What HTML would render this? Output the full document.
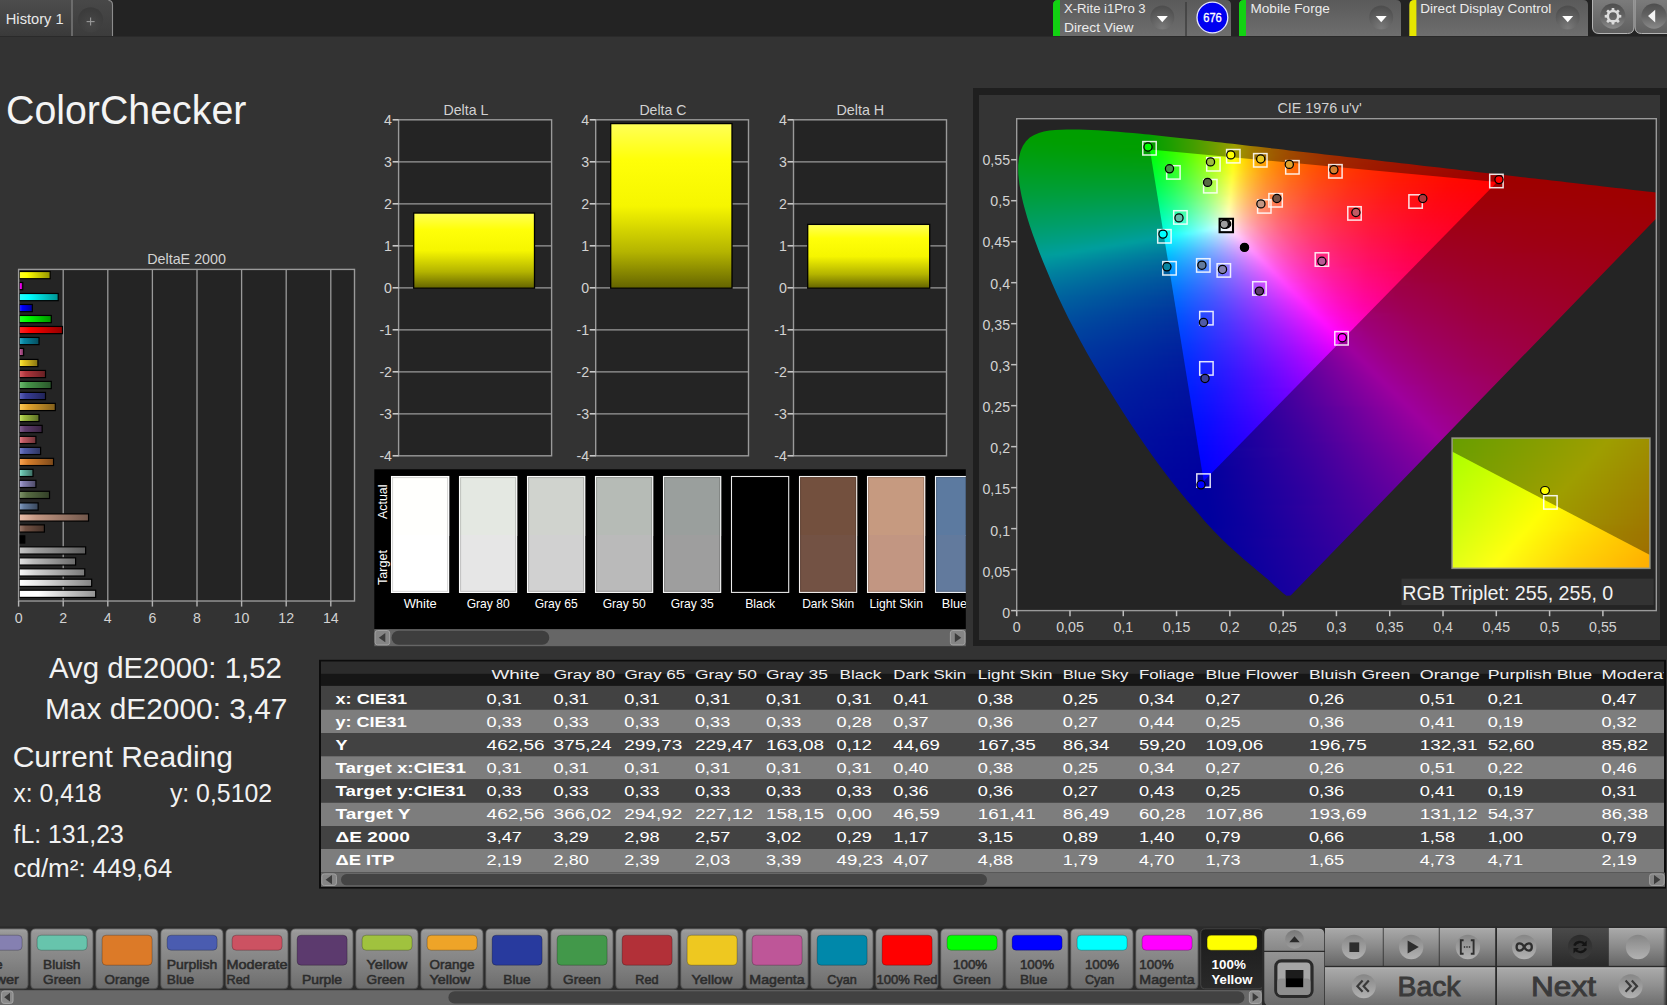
<!DOCTYPE html>
<html lang="en"><head><meta charset="utf-8"><title>ColorChecker</title>
<style>
html,body{margin:0;padding:0;background:#333333;overflow:hidden}
body{width:1667px;height:1005px;position:relative;font-family:"Liberation Sans", sans-serif}
#ov{position:absolute;left:0;top:0}
#ov text{font-family:"Liberation Sans", sans-serif;white-space:pre}
.a{position:absolute}
.s{height:3px}
</style></head>
<body>
<div class="a" style="left:972.6px;top:88.1px;width:695px;height:557.6px;background:#1f1f1f"></div>
<div class="a" style="left:979.2px;top:94.9px;width:681px;height:544.7px;background:#343434"></div>
<div class="a" style="left:1016.7px;top:118.7px;width:639.6px;height:491.9px;background:#242424"></div>
<div class="a" style="left:1016px;top:118px;width:640.3px;height:492.6px;overflow:hidden">
<div class="a" style="left:0;top:0;width:649px;height:493px;clip-path:polygon(274.7px 477.6px,270.5px 477.7px,266.9px 475px,263.6px 472px,259.8px 468.7px,256.3px 465.5px,252.3px 461.8px,249.2px 459.2px,245.7px 456.2px,241.7px 452.9px,237.4px 449.2px,232.6px 445.3px,227.5px 441px,222px 436.1px,215.9px 430.6px,212.7px 427.7px,209.4px 424.5px,206px 421.2px,202.5px 417.7px,198.8px 414px,195.1px 410px,191.1px 405.7px,186.9px 400.9px,182.4px 395.5px,177.2px 389.6px,171.7px 383.2px,165.9px 376.2px,159.9px 368.8px,153.7px 361px,147.4px 352.7px,140.9px 343.9px,134.3px 334.7px,127.5px 325px,120.5px 314.8px,113.5px 304.2px,106.4px 293.3px,99.3px 282px,92.2px 270.6px,85.1px 259px,78.1px 247.2px,71.3px 235.4px,64.7px 223.5px,58.3px 211.6px,52.3px 199.9px,46.6px 188.3px,41.3px 177px,36.4px 165.9px,31.8px 155.1px,27.5px 144.7px,23.5px 134.7px,19.9px 125.1px,16.6px 116px,13.7px 107.4px,11.2px 99.4px,9px 91.8px,7.1px 84.8px,5.6px 78.2px,4.4px 72px,3.4px 66.3px,2.8px 61px,2.3px 56.1px,2.2px 51.5px,2.2px 47.3px,3px 39.7px,4.5px 33.2px,6.9px 27.7px,10px 23.2px,13.8px 19.6px,18.1px 16.9px,22.8px 14.9px,27.9px 13.5px,33.4px 12.6px,39.1px 12.1px,45px 11.8px,51px 11.6px,57.1px 11.6px,63.1px 11.6px,69.3px 11.8px,75.5px 12px,81.9px 12.3px,88.5px 12.7px,95.2px 13.2px,102.2px 13.7px,109.5px 14.4px,117px 15.1px,124.8px 15.8px,128.8px 16.2px,132.8px 16.6px,137px 17px,141.3px 17.5px,145.6px 17.9px,150px 18.4px,154.6px 18.9px,159.2px 19.4px,163.9px 19.9px,168.7px 20.4px,173.6px 21px,178.6px 21.5px,183.7px 22.1px,188.9px 22.7px,194.2px 23.3px,199.7px 23.9px,205.2px 24.5px,210.8px 25.2px,216.6px 25.8px,222.5px 26.5px,228.4px 27.2px,234.5px 27.9px,240.7px 28.6px,247.1px 29.3px,253.5px 30.1px,260px 30.8px,266.7px 31.6px,273.4px 32.4px,280.3px 33.2px,287.3px 34px,294.3px 34.8px,301.5px 35.6px,308.8px 36.4px,316.1px 37.3px,323.5px 38.1px,331px 39px,338.6px 39.8px,346.3px 40.7px,354px 41.6px,361.8px 42.5px,369.6px 43.4px,377.4px 44.3px,385.2px 45.2px,393px 46.1px,400.7px 47px,408.3px 47.9px,415.8px 48.7px,423.3px 49.6px,430.8px 50.5px,438.2px 51.3px,445.7px 52.2px,453.1px 53px,460.4px 53.9px,467.5px 54.7px,474.5px 55.5px,481.2px 56.2px,487.9px 57px,494.4px 57.7px,500.7px 58.5px,506.9px 59.2px,512.9px 59.9px,518.8px 60.5px,524.5px 61.2px,530.1px 61.8px,535.4px 62.5px,540.6px 63.1px,545.6px 63.6px,550.5px 64.2px,555.1px 64.7px,559.6px 65.3px,564px 65.7px,568.2px 66.2px,572.2px 66.7px,579.9px 67.6px,587.1px 68.4px,593.8px 69.2px,600.2px 69.9px,606.3px 70.6px,611.9px 71.3px,617.2px 71.9px,622.1px 72.4px,626.6px 72.9px,630.8px 73.4px,636.2px 74px,640.7px 74.6px,645.8px 75.2px,650px 75.6px,654.3px 76.1px,658.7px 76.6px,662.9px 77.1px,665.1px 74.8px)">
<div style="filter:blur(1.1px)">
<div class="s"></div>
<div class="s"></div>
<div class="s"></div>
<div class="s" style="background:linear-gradient(90deg,#009e00 26px,#009e00 98px)"></div>
<div class="s" style="background:linear-gradient(90deg,#009e00 15px,#019e00 132px)"></div>
<div class="s" style="background:linear-gradient(90deg,#009e00 9px,#009e00 131px,#0e9e00 143px,#289e00 161px)"></div>
<div class="s" style="background:linear-gradient(90deg,#009e00 6px,#009e00 132px,#259e00 159px,#579e00 188px)"></div>
<div class="s" style="background:linear-gradient(90deg,#009e02 3px,#009e00 133px,#1b9e00 153px,#3f9e00 175px,#689e00 196px,#939e00 215px)"></div>
<div class="s" style="background:linear-gradient(90deg,#009e05 1px,#009e00 70px,#009e00 133px,#1c9e00 154px,#429e00 177px,#6e9e00 199px,#9d9e00 219px,#9e7300 241px)"></div>
<div class="s" style="background:linear-gradient(90deg,#009e08 0px,#019e00 134px,#1c9e00 154px,#429e00 177px,#6f9e00 199px,#9e9e00 219px,#9e8700 229px,#9e7400 240px,#9e5100 267px)"></div>
<div class="s" style="background:linear-gradient(90deg,#009e0a 0px,#009e00 134px,#1b9e00 154px,#429e00 177px,#6d9e00 198px,#9c9e00 218px,#9e7b00 235px,#9e6300 251px,#9e4d00 270px,#9e3b00 293px)"></div>
<div class="s" style="background:linear-gradient(90deg,#009e0d 0px,#019e03 135px,#1c9e01 155px,#429e00 177px,#6d9e00 198px,#9d9e00 218px,#9e7700 237px,#9e5800 259px,#9e3f00 286px,#9e2b00 319px)"></div>
<div class="s" style="background:linear-gradient(90deg,#009e10 0px,#009e07 135px,#1c9e05 155px,#429e02 177px,#6d9e00 198px,#9d9e00 218px,#9e8500 229px,#9e7100 240px,#9e4f00 267px,#9e3400 301px,#9e1f00 345px)"></div>
<div class="s" style="background:linear-gradient(90deg,#009e13 0px,#019e0a 136px,#1d9e08 156px,#439e06 178px,#6d9e04 198px,#9e9e02 218px,#9e8200 230px,#9e6c00 243px,#9e5800 258px,#9e4700 275px,#9e2b00 317px,#9e1600 372px)"></div>
<div class="s" style="background:linear-gradient(90deg,#009e16 0px,#009e0e 136px,#1b9e0c 155px,#419e0a 177px,#6d9e08 198px,#9c9e06 217px,#9e7e03 232px,#9e6701 246px,#9e5200 263px,#9e4000 282px,#9e2400 331px,#9e0f00 398px)"></div>
<div class="s" style="background:linear-gradient(90deg,#009e19 0px,#019e12 137px,#1c9e11 156px,#419e0f 177px,#699e0d 196px,#9e9c0b 218px,#9e7d07 232px,#9e6304 248px,#9e4d02 267px,#9e3a00 289px,#9e2b00 315px,#9e1d00 346px,#9e0a00 424px)"></div>
<div class="s" style="background:linear-gradient(90deg,#009e1c 0px,#009e16 137px,#1b9e15 156px,#439e13 178px,#6e9e12 198px,#9e9e10 217px,#9e7c0b 232px,#9e6108 249px,#9e4905 270px,#9e3602 294px,#9e2600 324px,#9e1900 359px,#9e0500 450px)"></div>
<div class="s" style="background:linear-gradient(90deg,#009e1f 0px,#019e1a 138px,#1d9e19 157px,#439e18 178px,#6c9e17 197px,#9e9e15 217px,#9e7b10 232px,#9e5d0b 251px,#9e4507 274px,#9e3104 301px,#9e2101 334px,#9e1400 373px,#9e0200 476px)"></div>
<div class="s" style="background:linear-gradient(90deg,#009e22 0px,#009e1f 138px,#1a9e1e 156px,#419e1d 177px,#6a9e1c 196px,#9e9d1b 217px,#9e7914 233px,#9e5a0e 253px,#9e4109 277px,#9e2d05 307px,#9e1d02 344px,#9e0f00 390px,#9e0400 451px,#9e0000 502px)"></div>
<div class="s" style="background:linear-gradient(90deg,#009e26 0px,#009e23 138px,#189e23 155px,#3e9e22 176px,#679e21 195px,#9e9c20 217px,#9e7618 234px,#9e5611 256px,#9e3d0b 282px,#9e2907 314px,#9e1803 357px,#9e0a00 411px,#9e0000 484px,#9e0000 528px)"></div>
<div class="s" style="background:linear-gradient(90deg,#009e29 0px,#009e28 139px,#1b9e28 157px,#429e27 178px,#6c9e27 197px,#9e9e27 216px,#9e8721 225px,#9e751c 234px,#9e5414 257px,#9e3a0d 285px,#9e2508 320px,#9e1404 369px,#9e0701 431px,#9e0000 483px,#9e0000 554px)"></div>
<div class="s" style="background:linear-gradient(90deg,#009e2c 0px,#009e2d 139px,#199e2d 156px,#409e2d 177px,#6a9e2d 196px,#9e9d2d 216px,#9e8626 225px,#9e7220 235px,#9e5117 259px,#9e360f 289px,#9e220a 326px,#9e1005 380px,#9e0401 449px,#9e0000 481px,#9e0000 580px)"></div>
<div class="s" style="background:linear-gradient(90deg,#009e30 0px,#009e31 140px,#1c9e32 158px,#429e32 178px,#689e33 195px,#9e9c33 216px,#9e862b 225px,#9e7225 235px,#9e4f1a 260px,#9e3312 292px,#9e1f0b 332px,#9e0d06 390px,#9e0102 465px,#9e0000 607px)"></div>
<div class="s" style="background:linear-gradient(90deg,#009e33 0px,#009e36 140px,#199e37 157px,#3f9e38 177px,#669e39 194px,#9e9e3a 215px,#9e9c39 216px,#9e8531 225px,#9e6f29 236px,#9e5c23 248px,#9e4c1d 262px,#9e3114 295px,#9e1c0c 338px,#9e0b07 397px,#9e0002 472px,#9e0000 633px)"></div>
<div class="s" style="background:linear-gradient(90deg,#009e37 0px,#009e3c 141px,#1b9e3c 158px,#419e3e 178px,#6d9e3f 197px,#9e9e40 215px,#9e8436 225px,#9e6e2e 236px,#9e5c27 248px,#9e4b21 262px,#9e2f16 296px,#9e1b0e 339px,#9e0b08 398px,#9e0004 471px,#9e0000 649px)"></div>
<div class="s" style="background:linear-gradient(90deg,#009e3a 0px,#009e41 141px,#1a9e42 158px,#419e44 178px,#6b9e45 196px,#9e9d47 215px,#9e833c 225px,#9e6d33 236px,#9e5b2b 248px,#9e4a24 262px,#9e2f19 296px,#9e1a10 339px,#9e0b0a 396px,#9e0005 468px,#9e0000 649px)"></div>
<div class="s" style="background:linear-gradient(90deg,#009e3e 0px,#009e46 142px,#1b9e48 159px,#419e4a 178px,#699e4c 195px,#9e9c4d 215px,#9e8242 225px,#9e6c38 236px,#9e5a30 248px,#9e4928 262px,#9e2e1c 296px,#9e1a13 339px,#9e0b0b 395px,#9e0006 465px,#9e0000 649px)"></div>
<div class="s" style="background:linear-gradient(90deg,#009e42 1px,#009e4c 142px,#1b9e4e 159px,#419e50 178px,#6e9e53 197px,#9e9e56 214px,#9e864a 223px,#9e6f3f 234px,#9e5c35 246px,#9e4b2d 260px,#9e2f1f 294px,#9e1a15 337px,#9e0b0d 393px,#9e0008 462px,#9e0001 649px)"></div>
<div class="s" style="background:linear-gradient(90deg,#009e46 1px,#009e52 143px,#1c9e54 160px,#439e57 179px,#6c9e5a 196px,#9e9d5d 214px,#9e8550 223px,#9e6e44 234px,#9e5b3a 246px,#9e4a31 260px,#9e2e22 294px,#9e1917 337px,#9e0a0f 392px,#9e0009 459px,#9e0001 649px)"></div>
<div class="s" style="background:linear-gradient(90deg,#009e4a 2px,#009e58 143px,#1a9e5a 159px,#409e5d 178px,#699e61 195px,#9e9c64 214px,#9e8456 223px,#9e6d49 234px,#9e5a3e 246px,#9e4935 260px,#9e2d25 294px,#9e1919 337px,#9e0a11 391px,#9e000a 457px,#9e0002 649px)"></div>
<div class="s" style="background:linear-gradient(90deg,#009e4e 3px,#009e5e 144px,#1b9e61 160px,#409e64 178px,#679e68 194px,#9e9e6d 213px,#9e9c6b 214px,#9e835c 223px,#9e6c4f 234px,#9e5943 246px,#9e4839 260px,#9e2c28 294px,#9e181c 337px,#9e0a13 390px,#9e000c 454px,#9e0003 649px)"></div>
<div class="s" style="background:linear-gradient(90deg,#009e52 4px,#009e64 144px,#1a9e67 160px,#429e6b 179px,#6c9e70 196px,#9e9e74 213px,#9e8564 222px,#9e6d55 233px,#9e5a49 245px,#9e493e 258px,#9e2e2c 291px,#9e181e 335px,#9e0a15 387px,#9e000d 451px,#9e0003 649px)"></div>
<div class="s" style="background:linear-gradient(90deg,#009e56 4px,#009e6a 145px,#1c9e6e 161px,#429e73 179px,#6a9e77 195px,#9e9d7c 213px,#9e846b 222px,#9e6c5b 233px,#9e594e 245px,#9e4843 258px,#9e2d2f 291px,#9e1821 335px,#9e0a17 386px,#9e000f 448px,#9e0004 649px)"></div>
<div class="s" style="background:linear-gradient(90deg,#009e5a 5px,#009e71 145px,#199e75 160px,#3f9e7a 178px,#679e7f 194px,#9e9c84 213px,#9e8372 222px,#9e6b61 233px,#9e5853 245px,#9e4847 258px,#9e2c33 291px,#9e1723 335px,#9e0919 385px,#9e0011 445px,#9e0005 648px)"></div>
<div class="s" style="background:linear-gradient(90deg,#009e5f 6px,#009e6a 83px,#009e78 146px,#1c9e7c 162px,#449e82 180px,#6d9e88 196px,#9e9e8e 212px,#9e847b 221px,#9e6e6a 231px,#9e5a5a 243px,#9e494d 256px,#9e2d37 289px,#9e1826 332px,#9e0a1b 382px,#9e0012 442px,#9e0006 645px)"></div>
<div class="s" style="background:linear-gradient(90deg,#009e63 7px,#009e6f 83px,#009e7f 146px,#1a9e83 161px,#419e89 179px,#6b9e90 195px,#9e9d97 212px,#9e8382 221px,#9e6d70 231px,#9e595f 243px,#9e4851 256px,#9e2c3a 289px,#9e1729 332px,#9e091d 381px,#9e0014 439px,#9e0007 642px)"></div>
<div class="s" style="background:linear-gradient(90deg,#009e68 8px,#009e75 84px,#019e86 147px,#1b9e8b 162px,#3e9e91 178px,#639e97 192px,#8c9e9e 206px,#9e999c 213px,#9e8087 222px,#9e6a74 232px,#9e5663 244px,#9e4655 257px,#9e2a3d 290px,#9e162b 332px,#9e091f 379px,#9e0016 436px,#9e0007 639px)"></div>
<div class="s" style="background:linear-gradient(90deg,#009e6d 9px,#009e7b 85px,#009e8d 147px,#159e91 159px,#329e97 173px,#5a9e9e 189px,#9e8f9d 216px,#9e7888 225px,#9e6274 236px,#9e4156 261px,#9e273e 294px,#9e142c 336px,#9e0821 381px,#9e0018 433px,#9e000f 521px,#9e0008 636px)"></div>
<div class="s" style="background:linear-gradient(90deg,#009e71 10px,#009e81 86px,#019e95 148px,#2d9e9e 171px,#9e859d 219px,#9e7088 228px,#9e5c75 239px,#9e3d57 264px,#9e2540 297px,#9e122d 340px,#9e0822 382px,#9e001a 430px,#9e0010 518px,#9e0009 634px)"></div>
<div class="s" style="background:linear-gradient(90deg,#009e76 11px,#009e87 86px,#009e9c 148px,#3d929e 180px,#9e7d9d 222px,#9e6989 231px,#9e5676 242px,#9e3858 268px,#9e2241 301px,#9e112e 344px,#9e001c 427px,#9e0012 515px,#9e000a 631px)"></div>
<div class="s" style="background:linear-gradient(90deg,#009e7b 12px,#009e8b 78px,#009e9e 134px,#01989e 149px,#3e8a9e 182px,#9e759d 225px,#9e6188 235px,#9e5076 246px,#9e3458 272px,#9e1f41 305px,#9e0f2f 348px,#9e001e 425px,#9e0013 512px,#9e000b 628px)"></div>
<div class="s" style="background:linear-gradient(90deg,#009e80 13px,#009e8e 68px,#009e9e 116px,#00919e 149px,#3d829e 183px,#9e6d9d 228px,#9e4c78 248px,#9e335c 272px,#9e1f46 303px,#9e1034 341px,#9e0020 422px,#9e0015 509px,#9e000c 625px)"></div>
<div class="s" style="background:linear-gradient(90deg,#009e86 14px,#009e9e 98px,#018a9e 150px,#3e7b9e 185px,#9e669d 231px,#9e4779 251px,#9e305e 275px,#9e1d47 306px,#9e0f36 344px,#9e0022 419px,#9e0016 506px,#9e000d 622px)"></div>
<div class="s" style="background:linear-gradient(90deg,#009e8b 15px,#009e9e 80px,#00849e 150px,#3d759e 186px,#9e5f9d 234px,#9e437a 254px,#9e2d5f 278px,#9e1b48 309px,#9e0d37 347px,#9e0024 416px,#9e0018 503px,#9e000e 619px)"></div>
<div class="s" style="background:linear-gradient(90deg,#009e91 17px,#009e9e 62px,#017e9e 151px,#3f6e9e 189px,#9e599d 237px,#9e3f7b 257px,#9e2a60 281px,#9e194a 311px,#9e0c39 349px,#9e0027 413px,#9e0019 500px,#9e000f 616px)"></div>
<div class="s" style="background:linear-gradient(90deg,#009e96 18px,#009e9e 44px,#00789e 151px,#3e699e 190px,#9e539d 240px,#9e3b7c 260px,#9e2761 284px,#9e174c 314px,#9e0b3a 352px,#9e0029 409px,#9e0021 455px,#9e0010 613px)"></div>
<div class="s" style="background:linear-gradient(90deg,#009e9c 19px,#00959e 55px,#01739e 152px,#3f639e 192px,#9e4e9d 243px,#9e377d 263px,#9e2462 288px,#9e154c 318px,#9e0a3b 355px,#9e002b 407px,#9e0022 456px,#9e0011 610px)"></div>
<div class="s" style="background:linear-gradient(90deg,#009a9e 20px,#006e9e 152px,#3e5f9e 193px,#9e499d 246px,#9e337d 266px,#9e2163 291px,#9e134d 321px,#9e093d 357px,#9e002e 404px,#9e0023 457px,#9e0013 607px)"></div>
<div class="s" style="background:linear-gradient(90deg,#00959e 21px,#01699e 153px,#40599e 196px,#9e449d 249px,#9e307e 269px,#9e1f64 294px,#9e124f 324px,#9e073e 360px,#9e0031 401px,#9e0024 458px,#9e0014 604px)"></div>
<div class="s" style="background:linear-gradient(90deg,#00909e 22px,#00659e 153px,#195e9e 172px,#3f559e 197px,#9e3f9d 252px,#9e2c7f 272px,#9e1c65 297px,#9e1050 326px,#9e063f 362px,#9e0033 398px,#9e0026 459px,#9e0015 602px)"></div>
<div class="s" style="background:linear-gradient(90deg,#008a9e 24px,#01619e 154px,#40509e 199px,#9e3b9d 255px,#9e297f 275px,#9e1a66 300px,#9e0f51 329px,#9e0540 365px,#9e0036 395px,#9e0027 460px,#9e0016 599px)"></div>
<div class="s" style="background:linear-gradient(90deg,#00859e 25px,#005d9e 154px,#3f4d9e 200px,#9e379d 258px,#9e2680 278px,#9e1867 303px,#9e0d53 332px,#9e0442 367px,#9e0039 392px,#9e0028 460px,#9e0017 596px)"></div>
<div class="s" style="background:linear-gradient(90deg,#00819e 26px,#01599e 155px,#3f499e 202px,#9e339e 261px,#9e2381 281px,#9e1668 305px,#9e0c54 334px,#9e0343 369px,#9e003c 389px,#9e002a 461px,#9e0018 593px)"></div>
<div class="s" style="background:linear-gradient(90deg,#007d9e 27px,#00559e 155px,#3f459e 203px,#9e2f9e 264px,#9e2081 284px,#9e1469 308px,#9e0a55 337px,#9e0245 371px,#9e0037 412px,#9e002b 461px,#9e001a 590px)"></div>
<div class="s" style="background:linear-gradient(90deg,#00789e 29px,#01529e 156px,#40419e 206px,#9e2b9e 267px,#9e1e82 287px,#9e126a 311px,#9e0956 340px,#9e0146 374px,#9e0038 414px,#9e002d 462px,#9e001b 587px)"></div>
<div class="s" style="background:linear-gradient(90deg,#00749e 30px,#004f9e 156px,#19489e 178px,#403e9e 207px,#9e289e 270px,#9e1b82 290px,#9e106b 314px,#9e0858 342px,#9e0147 376px,#9e002e 462px,#9e001c 584px)"></div>
<div class="s" style="background:linear-gradient(90deg,#00709e 31px,#014c9e 157px,#403b9e 209px,#9e259e 273px,#9e1983 293px,#9e0f6c 317px,#9e0659 345px,#9e0048 378px,#9e002f 463px,#9e001e 581px)"></div>
<div class="s" style="background:linear-gradient(90deg,#006c9e 33px,#00499e 157px,#3f389e 210px,#9e229e 276px,#9e1683 296px,#9e0d6d 320px,#9e055a 348px,#9e004a 380px,#9e0031 463px,#9e001f 578px)"></div>
<div class="s" style="background:linear-gradient(90deg,#00699e 34px,#01469e 158px,#41359e 213px,#9e1f9e 279px,#9e1484 299px,#9e0b6e 322px,#9e045b 350px,#9e004b 382px,#9e0032 463px,#9e0020 575px)"></div>
<div class="s" style="background:linear-gradient(90deg,#00659e 35px,#00439e 158px,#193c9e 182px,#40329e 214px,#9e1c9e 282px,#9e1284 302px,#9e0a6f 325px,#9e035c 352px,#9e004c 384px,#9e0034 464px,#9e0022 572px)"></div>
<div class="s" style="background:linear-gradient(90deg,#00629e 37px,#01409e 159px,#412f9e 216px,#9e1a9e 285px,#9e1085 305px,#9e0870 328px,#9e0058 365px,#9e004e 386px,#9e0035 464px,#9e0023 570px)"></div>
<div class="s" style="background:linear-gradient(90deg,#005f9e 38px,#003e9e 159px,#19379e 184px,#402d9e 217px,#9e179e 288px,#9e0f86 307px,#9e0771 330px,#9e005c 362px,#9e0050 387px,#9e0037 464px,#9e0025 567px)"></div>
<div class="s" style="background:linear-gradient(90deg,#005c9e 40px,#013c9e 160px,#402b9e 219px,#9e159e 291px,#9e0c86 311px,#9e0672 333px,#9e005f 360px,#9e0051 389px,#9e0038 464px,#9e0026 564px)"></div>
<div class="s" style="background:linear-gradient(90deg,#00599e 41px,#00399e 160px,#40289e 220px,#9e129e 294px,#9e0b86 314px,#9e0472 336px,#9e0064 357px,#9e0052 391px,#9e003a 464px,#9e0028 561px)"></div>
<div class="s" style="background:linear-gradient(90deg,#00569e 42px,#01379e 161px,#41269e 223px,#9e109e 297px,#9e0988 316px,#9e0374 338px,#9e0062 364px,#9e0053 393px,#9e003b 464px,#9e0029 558px)"></div>
<div class="s" style="background:linear-gradient(90deg,#00539e 44px,#00359e 161px,#1a2e9e 188px,#40249e 224px,#9e0e9e 300px,#9e0788 319px,#9e0274 341px,#9e0055 394px,#9e003d 464px,#9e002b 555px)"></div>
<div class="s" style="background:linear-gradient(90deg,#00509e 45px,#01339e 162px,#41229e 226px,#9e0c9e 303px,#9e0688 322px,#9e0175 344px,#9e0056 396px,#9e003e 464px,#9e002c 552px)"></div>
<div class="s" style="background:linear-gradient(90deg,#004e9e 47px,#00319e 162px,#1a2a9e 190px,#40209e 227px,#9e0a9e 306px,#9e0489 325px,#9e0076 346px,#9e0058 397px,#9e0040 463px,#9e002e 549px)"></div>
<div class="s" style="background:linear-gradient(90deg,#004b9e 48px,#012f9e 163px,#421e9e 230px,#9e089e 309px,#9e0389 328px,#9e0077 349px,#9e0059 399px,#9e0042 463px,#9e0030 546px)"></div>
<div class="s" style="background:linear-gradient(90deg,#00499e 50px,#002d9e 163px,#1a269e 192px,#411c9e 231px,#9e079e 312px,#9e028a 330px,#9e0078 351px,#9e005b 400px,#9e0044 463px,#9e0032 543px)"></div>
<div class="s" style="background:linear-gradient(90deg,#00469e 51px,#012c9e 164px,#411a9e 233px,#9e059e 315px,#9e0079 353px,#9e005c 402px,#9e0045 463px,#9e0033 540px)"></div>
<div class="s" style="background:linear-gradient(90deg,#00449e 53px,#002a9e 164px,#1a239e 194px,#41199e 234px,#9e039e 318px,#9e007a 356px,#9e005e 403px,#9e0047 463px,#9e0035 538px)"></div>
<div class="s" style="background:linear-gradient(90deg,#00429e 55px,#01289e 165px,#41179e 236px,#9e029e 321px,#9e007b 358px,#9e005f 405px,#9e0048 463px,#9e0037 535px)"></div>
<div class="s" style="background:linear-gradient(90deg,#00409e 56px,#00279e 165px,#1a1f9e 196px,#40169e 237px,#9e019e 324px,#9e007c 361px,#9e0060 406px,#9e004a 462px,#9e0039 532px)"></div>
<div class="s" style="background:linear-gradient(90deg,#003d9e 58px,#01259e 166px,#1b1e9e 198px,#42149e 240px,#9e009e 327px,#9e007d 363px,#9e0062 407px,#9e004c 462px,#9e003b 529px)"></div>
<div class="s" style="background:linear-gradient(90deg,#003b9e 59px,#00249e 166px,#1a1c9e 198px,#41129e 241px,#9e009e 330px,#9e007d 366px,#9e0063 409px,#9e004e 462px,#9e003c 526px)"></div>
<div class="s" style="background:linear-gradient(90deg,#00399e 61px,#01229e 167px,#41119e 243px,#8d009e 317px,#9e009e 333px,#9e007e 368px,#9e0065 410px,#9e0050 461px,#9e003e 523px)"></div>
<div class="s" style="background:linear-gradient(90deg,#00379e 63px,#00219e 167px,#1a1a9e 200px,#41109e 244px,#87009e 315px,#9e009e 336px,#9e0080 370px,#9e0066 411px,#9e0052 460px,#9e0041 520px)"></div>
<div class="s" style="background:linear-gradient(90deg,#00369e 64px,#01209e 168px,#410e9e 246px,#82009e 312px,#9e009e 339px,#9e0081 372px,#9e0068 412px,#9e0053 460px,#9e0043 517px)"></div>
<div class="s" style="background:linear-gradient(90deg,#00349e 66px,#001e9e 168px,#1a179e 202px,#410d9e 247px,#7d009e 310px,#9e009e 342px,#9e0081 375px,#9e0069 413px,#9e0055 459px,#9e0045 514px)"></div>
<div class="s" style="background:linear-gradient(90deg,#00329e 68px,#011d9e 169px,#410c9e 249px,#77009e 307px,#9e009e 345px,#9e0082 377px,#9e006b 414px,#9e0058 458px,#9e0047 511px)"></div>
<div class="s" style="background:linear-gradient(90deg,#00309e 70px,#001c9e 169px,#1a159e 204px,#410b9e 251px,#72009e 304px,#9e009e 348px,#9e0082 380px,#9e006c 416px,#9e0059 459px,#9e0049 509px)"></div>
<div class="s" style="background:linear-gradient(90deg,#002f9e 71px,#011b9e 170px,#2c0f9e 228px,#6d009e 301px,#9e009e 351px,#9e0084 382px,#9e006e 417px,#9e005b 458px,#9e004b 506px)"></div>
<div class="s" style="background:linear-gradient(90deg,#002d9e 73px,#001a9e 170px,#2a0e9e 226px,#68009e 298px,#9e009e 354px,#9e0085 384px,#9e006f 418px,#9e005d 457px,#9e004d 503px)"></div>
<div class="s" style="background:linear-gradient(90deg,#002b9e 75px,#01189e 171px,#290d9e 226px,#63009e 295px,#9e009e 357px,#9e0086 386px,#9e0071 418px,#9e005f 456px,#9e0050 500px)"></div>
<div class="s" style="background:linear-gradient(90deg,#002a9e 77px,#01179e 172px,#270d9e 225px,#5f009e 292px,#9e009e 360px,#9e0087 388px,#9e0073 419px,#9e0062 455px,#9e0052 497px)"></div>
<div class="s" style="background:linear-gradient(90deg,#00289e 78px,#01169e 172px,#240c9e 223px,#5a009e 289px,#9e009e 363px,#9e0088 390px,#9e0074 420px,#9e0055 494px)"></div>
<div class="s" style="background:linear-gradient(90deg,#00279e 80px,#01159e 173px,#230c9e 223px,#56009e 286px,#9e009e 366px,#9e0089 392px,#9e0076 421px,#9e0057 491px)"></div>
<div class="s" style="background:linear-gradient(90deg,#00259e 82px,#01149e 174px,#220b9e 222px,#52009e 283px,#9e009e 369px,#9e0089 395px,#9e0078 422px,#9e005a 488px)"></div>
<div class="s" style="background:linear-gradient(90deg,#00249e 84px,#01139e 174px,#200b9e 220px,#4e009e 280px,#9e009e 372px,#9e0079 423px,#9e005d 485px)"></div>
<div class="s" style="background:linear-gradient(90deg,#00239e 86px,#01129e 175px,#1f0a9e 220px,#4a009e 277px,#9e009e 375px,#9e007b 423px,#9e005f 482px)"></div>
<div class="s" style="background:linear-gradient(90deg,#00219e 88px,#01119e 176px,#1d0a9e 219px,#46009e 274px,#9e009e 378px,#9e007d 424px,#9e0062 479px)"></div>
<div class="s" style="background:linear-gradient(90deg,#00209e 89px,#01119e 176px,#43009e 272px,#9e009e 381px,#9e007e 425px,#9e0065 477px)"></div>
<div class="s" style="background:linear-gradient(90deg,#001f9e 91px,#01109e 177px,#40009e 269px,#9e009e 384px,#9e0080 426px,#9e0068 474px)"></div>
<div class="s" style="background:linear-gradient(90deg,#001d9e 93px,#020f9e 178px,#3c009e 266px,#9e009e 387px,#9e0082 426px,#9e006b 471px)"></div>
<div class="s" style="background:linear-gradient(90deg,#001c9e 95px,#020e9e 179px,#39009e 263px,#9e009e 390px,#9e0083 427px,#9e006e 468px)"></div>
<div class="s" style="background:linear-gradient(90deg,#001b9e 97px,#020d9e 180px,#36009e 260px,#67009e 326px,#9e009e 393px,#9e0086 427px,#9e0071 465px)"></div>
<div class="s" style="background:linear-gradient(90deg,#001a9e 99px,#000d9e 176px,#020c9e 181px,#33009e 257px,#65009e 326px,#9e009e 396px,#9e0087 428px,#9e0074 462px)"></div>
<div class="s" style="background:linear-gradient(90deg,#00199e 101px,#000c9e 177px,#30009e 254px,#63009e 325px,#9e009e 399px,#9e0089 428px,#9e0077 459px)"></div>
<div class="s" style="background:linear-gradient(90deg,#00189e 103px,#000b9e 178px,#2d009e 251px,#61009e 325px,#9e009e 402px,#9e007b 456px)"></div>
<div class="s" style="background:linear-gradient(90deg,#00169e 105px,#010b9e 179px,#2a009e 248px,#60009e 325px,#9e009e 405px,#9e007e 453px)"></div>
<div class="s" style="background:linear-gradient(90deg,#00159e 107px,#010a9e 180px,#27009e 245px,#41009e 284px,#9e009e 408px,#9e0082 450px)"></div>
<div class="s" style="background:linear-gradient(90deg,#00149e 109px,#01099e 181px,#24009e 242px,#41009e 286px,#9e009e 411px,#9e0086 447px)"></div>
<div class="s" style="background:linear-gradient(90deg,#00139e 110px,#01089e 182px,#22009e 239px,#42009e 289px,#9e009e 414px,#9e0089 445px)"></div>
<div class="s" style="background:linear-gradient(90deg,#00129e 112px,#01089e 183px,#1f009e 236px,#43009e 291px,#9e009e 417px,#9e008d 442px)"></div>
<div class="s" style="background:linear-gradient(90deg,#00119e 114px,#02079e 185px,#1d009e 233px,#43009e 294px,#9e009e 420px,#9e0091 439px)"></div>
<div class="s" style="background:linear-gradient(90deg,#00109e 117px,#00079e 180px,#03069e 188px,#1b009e 230px,#44009e 297px,#9e009e 423px,#9e0095 436px)"></div>
<div class="s" style="background:linear-gradient(90deg,#000f9e 119px,#00069e 181px,#05059e 192px,#19009e 228px,#3a009e 282px,#9e009e 426px,#9e0099 433px)"></div>
<div class="s" style="background:linear-gradient(90deg,#000f9e 121px,#00069e 181px,#07049e 196px,#17009e 225px,#47009e 305px,#9e009e 430px)"></div>
<div class="s" style="background:linear-gradient(90deg,#000e9e 123px,#00059e 182px,#07039e 197px,#14009e 222px,#46009e 305px,#9a009e 427px)"></div>
<div class="s" style="background:linear-gradient(90deg,#000d9e 125px,#00059e 182px,#07039e 197px,#44009e 303px,#96009e 424px)"></div>
<div class="s" style="background:linear-gradient(90deg,#000c9e 127px,#00049e 183px,#07029e 198px,#43009e 303px,#91009e 421px)"></div>
<div class="s" style="background:linear-gradient(90deg,#000b9e 129px,#00049e 183px,#07029e 198px,#41009e 301px,#8d009e 418px)"></div>
<div class="s" style="background:linear-gradient(90deg,#000a9e 131px,#00039e 184px,#06019e 198px,#3e009e 299px,#89009e 415px)"></div>
<div class="s" style="background:linear-gradient(90deg,#000a9e 133px,#00039e 184px,#06019e 199px,#3d009e 299px,#86009e 413px)"></div>
<div class="s" style="background:linear-gradient(90deg,#00099e 135px,#00029e 185px,#06019e 199px,#3b009e 297px,#82009e 410px)"></div>
<div class="s" style="background:linear-gradient(90deg,#00089e 138px,#00029e 185px,#07009e 201px,#3a009e 297px,#7f009e 407px)"></div>
<div class="s" style="background:linear-gradient(90deg,#00079e 140px,#00019e 186px,#06009e 201px,#38009e 295px,#7b009e 404px)"></div>
<div class="s" style="background:linear-gradient(90deg,#00069e 142px,#00019e 186px,#06009e 201px,#37009e 294px,#77009e 401px)"></div>
<div class="s" style="background:linear-gradient(90deg,#00069e 144px,#00019e 187px,#06009e 202px,#35009e 293px,#74009e 398px)"></div>
<div class="s" style="background:linear-gradient(90deg,#00059e 147px,#00009e 187px,#07009e 203px,#34009e 292px,#71009e 395px)"></div>
<div class="s" style="background:linear-gradient(90deg,#00049e 149px,#00009e 188px,#07009e 204px,#33009e 291px,#6d009e 392px)"></div>
<div class="s" style="background:linear-gradient(90deg,#00049e 151px,#00009e 188px,#06009e 204px,#31009e 290px,#6a009e 389px)"></div>
<div class="s" style="background:linear-gradient(90deg,#00039e 154px,#00009e 189px,#07009e 206px,#30009e 289px,#67009e 386px)"></div>
<div class="s" style="background:linear-gradient(90deg,#00029e 156px,#00009e 189px,#07009e 207px,#2f009e 289px,#64009e 383px)"></div>
<div class="s" style="background:linear-gradient(90deg,#00029e 159px,#00009e 190px,#08009e 209px,#2f009e 289px,#61009e 381px)"></div>
<div class="s" style="background:linear-gradient(90deg,#00019e 161px,#00009e 190px,#08009e 209px,#2d009e 287px,#5f009e 378px)"></div>
<div class="s" style="background:linear-gradient(90deg,#00009e 164px,#00009e 191px,#08009e 211px,#2c009e 287px,#5c009e 375px)"></div>
<div class="s" style="background:linear-gradient(90deg,#00009e 166px,#00009e 191px,#08009e 212px,#2b009e 286px,#59009e 372px)"></div>
<div class="s" style="background:linear-gradient(90deg,#00009e 169px,#00009e 192px,#09009e 215px,#56009e 369px)"></div>
<div class="s" style="background:linear-gradient(90deg,#00009e 171px,#00009e 192px,#09009e 216px,#53009e 366px)"></div>
<div class="s" style="background:linear-gradient(90deg,#00009e 174px,#00009e 193px,#0a009e 219px,#51009e 363px)"></div>
<div class="s" style="background:linear-gradient(90deg,#00009e 176px,#00009e 194px,#0a009e 220px,#4e009e 360px)"></div>
<div class="s" style="background:linear-gradient(90deg,#00009e 179px,#00009e 194px,#0b009e 223px,#4c009e 357px)"></div>
<div class="s" style="background:linear-gradient(90deg,#00009e 182px,#00009e 195px,#0d009e 227px,#49009e 354px)"></div>
<div class="s" style="background:linear-gradient(90deg,#00009e 184px,#00009e 195px,#0d009e 229px,#47009e 351px)"></div>
<div class="s" style="background:linear-gradient(90deg,#00009e 187px,#01009e 197px,#10009e 235px,#45009e 349px)"></div>
<div class="s" style="background:linear-gradient(90deg,#00009e 190px,#11009e 240px,#43009e 346px)"></div>
<div class="s" style="background:linear-gradient(90deg,#00009e 192px,#13009e 244px,#40009e 343px)"></div>
<div class="s" style="background:linear-gradient(90deg,#00009e 195px,#15009e 251px,#3e009e 340px)"></div>
<div class="s" style="background:linear-gradient(90deg,#00009e 198px,#3c009e 337px)"></div>
<div class="s" style="background:linear-gradient(90deg,#01009e 201px,#3a009e 334px)"></div>
<div class="s" style="background:linear-gradient(90deg,#02009e 204px,#38009e 331px)"></div>
<div class="s" style="background:linear-gradient(90deg,#03009e 208px,#35009e 328px)"></div>
<div class="s" style="background:linear-gradient(90deg,#04009e 211px,#33009e 325px)"></div>
<div class="s" style="background:linear-gradient(90deg,#05009e 214px,#31009e 322px)"></div>
<div class="s" style="background:linear-gradient(90deg,#06009e 217px,#30009e 320px)"></div>
<div class="s" style="background:linear-gradient(90deg,#07009e 221px,#2e009e 317px)"></div>
<div class="s" style="background:linear-gradient(90deg,#08009e 224px,#2c009e 314px)"></div>
<div class="s" style="background:linear-gradient(90deg,#09009e 228px,#2a009e 311px)"></div>
<div class="s" style="background:linear-gradient(90deg,#0a009e 232px,#29009e 308px)"></div>
<div class="s" style="background:linear-gradient(90deg,#0b009e 235px,#27009e 305px)"></div>
<div class="s" style="background:linear-gradient(90deg,#0c009e 239px,#25009e 302px)"></div>
<div class="s" style="background:linear-gradient(90deg,#0d009e 242px,#23009e 299px)"></div>
<div class="s" style="background:linear-gradient(90deg,#0e009e 246px,#22009e 296px)"></div>
<div class="s" style="background:linear-gradient(90deg,#0f009e 249px,#20009e 293px)"></div>
<div class="s" style="background:linear-gradient(90deg,#10009e 252px,#1e009e 290px)"></div>
<div class="s" style="background:linear-gradient(90deg,#11009e 256px,#1d009e 288px)"></div>
<div class="s" style="background:linear-gradient(90deg,#12009e 259px,#1c009e 285px)"></div>
<div class="s" style="background:linear-gradient(90deg,#13009e 263px,#1a009e 282px)"></div>
<div class="s"></div>
<div class="s"></div>
<div class="s"></div>
<div class="s"></div>
<div class="s"></div>
</div></div>
<div class="a" style="left:0;top:0;width:649px;height:493px;clip-path:polygon(481.1px 63.9px,133.9px 31.5px,187.7px 363.2px)">
<div style="filter:blur(1.1px)">
<div class="s"></div>
<div class="s"></div>
<div class="s"></div>
<div class="s"></div>
<div class="s"></div>
<div class="s"></div>
<div class="s"></div>
<div class="s"></div>
<div class="s"></div>
<div class="s"></div>
<div class="s" style="background:linear-gradient(90deg,#00ff01 128px,#00ff00 134px,#07ff00 138px,#27ff00 152px,#4eff00 167px)"></div>
<div class="s" style="background:linear-gradient(90deg,#00ff06 129px,#03ff05 136px,#32ff01 157px,#6dff00 178px,#b3ff00 199px)"></div>
<div class="s" style="background:linear-gradient(90deg,#00ff0b 129px,#00ff0b 135px,#08ff0a 139px,#28ff08 153px,#52ff05 169px,#a2ff01 194px,#ceff00 206px,#feff00 218px,#ffd000 231px)"></div>
<div class="s" style="background:linear-gradient(90deg,#00ff11 129px,#00ff10 135px,#07ff10 139px,#27ff0e 153px,#4fff0c 168px,#a2ff07 194px,#ffff02 218px,#ffdc01 227px,#ffbb00 238px,#ff9e00 250px,#ff8500 263px)"></div>
<div class="s" style="background:linear-gradient(90deg,#00ff17 130px,#00ff17 136px,#08ff16 140px,#29ff14 154px,#51ff12 169px,#9eff0e 193px,#fffe0a 218px,#ffe207 225px,#ffc805 233px,#ff9c02 250px,#ff7700 271px,#ff5900 295px)"></div>
<div class="s" style="background:linear-gradient(90deg,#00ff1e 130px,#00ff1d 136px,#05ff1d 139px,#25ff1b 153px,#4eff19 168px,#9bff16 192px,#ccff14 205px,#fdff12 217px,#fffc11 218px,#ffda0e 227px,#ffbb0a 237px,#ffa007 248px,#ff8605 261px,#ff7002 275px,#ff5d00 290px,#ff3c00 327px)"></div>
<div class="s" style="background:linear-gradient(90deg,#00ff24 131px,#00ff24 137px,#08ff23 141px,#2aff22 155px,#50ff20 169px,#a2ff1d 194px,#ffff1a 217px,#ffd514 228px,#ffb20f 240px,#ff920b 254px,#ff7607 270px,#ff5e04 288px,#ff4902 309px,#ff3700 332px,#ff2800 359px)"></div>
<div class="s" style="background:linear-gradient(90deg,#00ff2b 131px,#00ff2a 137px,#07ff2a 141px,#26ff29 154px,#50ff28 169px,#9fff25 193px,#fffe22 217px,#ffd01b 229px,#ffa914 243px,#ff850f 260px,#ff680a 279px,#ff4f06 301px,#ff3a03 327px,#ff2800 357px,#ff1900 391px)"></div>
<div class="s" style="background:linear-gradient(90deg,#00ff32 132px,#00ff31 138px,#06ff31 141px,#25ff30 154px,#4fff2f 169px,#9cff2e 192px,#fffd2b 217px,#ffcc22 230px,#ffa019 246px,#ff7b12 265px,#ff5d0d 287px,#ff4308 313px,#ff2e04 344px,#ff1c01 380px,#ff0e00 423px)"></div>
<div class="s" style="background:linear-gradient(90deg,#00ff39 132px,#00ff39 138px,#05ff39 141px,#24ff38 154px,#4cff37 168px,#98ff36 191px,#caff35 204px,#feff35 216px,#fffc34 217px,#ffdf2e 224px,#ffc428 232px,#ff981e 249px,#ff7216 270px,#ff530f 295px,#ff3909 325px,#ff2405 361px,#ff1301 404px,#ff0600 455px)"></div>
<div class="s" style="background:linear-gradient(90deg,#00ff40 133px,#00ff40 139px,#06ff40 142px,#26ff40 155px,#51ff40 170px,#a3ff3f 194px,#ffff3e 216px,#ffde36 224px,#ffc32f 232px,#ffaa29 241px,#ff9323 251px,#ff6b19 274px,#ff4b11 302px,#ff300b 337px,#ff1b05 379px,#ff0a01 432px,#ff0000 487px)"></div>
<div class="s" style="background:linear-gradient(90deg,#00ff48 133px,#00ff48 139px,#05ff48 142px,#25ff48 155px,#4eff48 169px,#9cff48 192px,#fffe48 216px,#ffdd3f 224px,#ffc137 232px,#ffa830 241px,#ff9129 251px,#ff6a1e 274px,#ff4a15 302px,#ff2f0e 337px,#ff1b08 379px,#ff0903 434px,#ff0000 487px)"></div>
<div class="s" style="background:linear-gradient(90deg,#00ff50 134px,#00ff50 140px,#07ff50 143px,#24ff50 155px,#4dff51 169px,#9cff51 192px,#ccff52 204px,#fdff52 215px,#fffc52 216px,#ffdb47 224px,#ffc03f 232px,#ffa737 241px,#ff9030 251px,#ff6923 274px,#ff4919 302px,#ff2f11 337px,#ff1a0a 379px,#ff0805 435px,#ff0001 486px)"></div>
<div class="s" style="background:linear-gradient(90deg,#00ff57 134px,#00ff58 140px,#06ff58 143px,#24ff59 155px,#4cff59 169px,#74ff5a 181px,#a0ff5b 193px,#cdff5c 204px,#feff5d 215px,#ffde51 223px,#ffc248 231px,#ffa83f 240px,#ff9337 249px,#ff6a29 272px,#ff4a1e 300px,#ff2f15 335px,#ff1a0d 377px,#ff0807 432px,#ff0003 483px)"></div>
<div class="s" style="background:linear-gradient(90deg,#00ff60 135px,#00ff60 141px,#07ff60 144px,#28ff61 157px,#4fff63 170px,#a0ff65 193px,#fffe67 215px,#ffe05c 222px,#ffc451 230px,#ffa947 239px,#ff923e 249px,#ff692f 272px,#ff4a23 299px,#ff2f19 333px,#ff1a10 375px,#ff0809 430px,#ff0005 480px)"></div>
<div class="s" style="background:linear-gradient(90deg,#00ff68 135px,#00ff69 141px,#04ff69 143px,#22ff6a 155px,#4bff6c 169px,#99ff6f 191px,#fffd72 215px,#ffdf65 222px,#ffc25a 230px,#ffa84f 239px,#ff9045 249px,#ff6935 271px,#ff4927 298px,#ff2f1c 332px,#ff1a13 373px,#ff080c 427px,#ff0007 477px)"></div>
<div class="s" style="background:linear-gradient(90deg,#00ff71 136px,#01ff72 142px,#05ff72 144px,#24ff74 156px,#4eff76 170px,#99ff79 191px,#cbff7c 203px,#feff7e 214px,#fffc7d 215px,#ffdd6f 222px,#ffc162 230px,#ffa756 239px,#ff914d 248px,#ff6a3b 270px,#ff492c 297px,#ff2f20 330px,#ff1a17 371px,#ff080e 425px,#ff0009 474px)"></div>
<div class="s" style="background:linear-gradient(90deg,#00ff7a 136px,#00ff7a 142px,#04ff7b 144px,#23ff7d 156px,#4dff80 170px,#77ff82 182px,#a1ff85 193px,#d0ff87 204px,#ffff8a 214px,#ffe07b 221px,#ffc36d 229px,#ffa860 238px,#ff9255 247px,#ff6a41 269px,#ff4a32 295px,#ff2f25 328px,#ff1a1a 369px,#ff0811 422px,#ff000b 471px)"></div>
<div class="s" style="background:linear-gradient(90deg,#00ff83 137px,#01ff84 143px,#05ff84 145px,#24ff87 157px,#4dff8a 170px,#9dff8f 192px,#fffe95 214px,#ffde85 221px,#ffc477 228px,#ffa969 237px,#ff935d 246px,#ff6a48 268px,#ff4a37 294px,#ff2f29 327px,#ff1a1d 367px,#ff0814 420px,#ff000e 468px)"></div>
<div class="s" style="background:linear-gradient(90deg,#00ff8c 137px,#00ff8d 143px,#04ff8e 145px,#23ff91 157px,#4cff94 170px,#99ff9a 191px,#c8ff9e 202px,#fdffa2 213px,#fffca1 214px,#ffdd8f 221px,#ffc381 228px,#ffa871 237px,#ff9165 246px,#ff694e 268px,#ff493c 294px,#ff2f2d 326px,#ff1a21 366px,#ff0816 418px,#ff0010 465px)"></div>
<div class="s" style="background:linear-gradient(90deg,#00ff96 138px,#00ff97 143px,#05ff98 146px,#23ff9b 157px,#4bff9f 170px,#95ffa6 190px,#c9ffaa 202px,#feffaf 213px,#fffbad 214px,#ffdb9a 221px,#ffc18a 228px,#ffa67a 237px,#ff906c 246px,#ff6955 267px,#ff4941 293px,#ff2e31 325px,#ff1a24 364px,#ff0819 416px,#ff0012 462px)"></div>
<div class="s" style="background:linear-gradient(90deg,#00ff9f 138px,#00ffa1 144px,#04ffa2 146px,#22ffa5 157px,#4bffaa 170px,#72ffae 181px,#9effb2 192px,#fffebc 213px,#ffdea7 220px,#ffc396 227px,#ffaa86 235px,#ff9377 244px,#ff6b5d 265px,#ff4a48 291px,#ff2f36 323px,#ff1a28 362px,#ff081c 413px,#ff0015 459px)"></div>
<div class="s" style="background:linear-gradient(90deg,#00ffaa 139px,#00ffab 144px,#05ffac 147px,#23ffb0 158px,#4dffb5 171px,#9effbf 192px,#fffdc8 213px,#ffddb2 220px,#ffc2a0 227px,#ffa98f 235px,#ff917f 244px,#ff6963 265px,#ff494d 290px,#ff2e3b 322px,#ff1a2c 360px,#ff081f 410px,#ff0017 456px)"></div>
<div class="s" style="background:linear-gradient(90deg,#00ffb4 139px,#00ffb6 145px,#04ffb7 147px,#22ffbb 158px,#49ffc0 170px,#96ffca 190px,#c7ffd1 201px,#fdffd7 212px,#fffbd5 213px,#ffdbbd 220px,#ffc0aa 227px,#ffa798 235px,#ff9087 244px,#ff696b 264px,#ff4953 289px,#ff2f40 320px,#ff1a30 358px,#ff0822 408px,#ff001a 453px)"></div>
<div class="s" style="background:linear-gradient(90deg,#00ffbf 140px,#00ffc1 145px,#06ffc2 148px,#24ffc7 159px,#50ffcd 172px,#a3ffd9 193px,#ffffe6 212px,#ffdecc 219px,#ffc2b7 226px,#ffa8a3 234px,#ff9393 242px,#ff6b74 262px,#ff4a5a 287px,#ff2f45 318px,#ff1a34 355px,#ff0825 405px,#ff001c 450px)"></div>
<div class="s" style="background:linear-gradient(90deg,#00ffc9 140px,#00ffcc 146px,#04ffcd 148px,#23ffd3 159px,#4bffd9 171px,#9affe5 191px,#fffef3 212px,#ffdcd8 219px,#ffc1c2 226px,#ffa7ad 234px,#ff929b 242px,#ff6a7b 262px,#ff4a60 286px,#ff2f4a 317px,#ff1a38 354px,#ff0829 403px,#ff001f 447px)"></div>
<div class="s" style="background:linear-gradient(90deg,#00ffd5 141px,#00ffd7 146px,#03ffd8 148px,#1fffde 158px,#47ffe5 170px,#8dfff1 188px,#e2ffff 206px,#fdfaff 212px,#fff7fc 213px,#ffd6e0 220px,#ffbcc9 227px,#ff8ea2 243px,#ff6780 263px,#ff4865 287px,#ff2e4e 317px,#ff193c 353px,#ff082c 401px,#ff0022 444px)"></div>
<div class="s" style="background:linear-gradient(90deg,#00ffe0 141px,#02ffe4 148px,#35ffee 165px,#60fff6 177px,#92ffff 189px,#fdeaff 215px,#ffe6fc 216px,#ffc9e1 223px,#ffb0cb 230px,#ff85a4 246px,#ff6183 266px,#ff4469 289px,#ff2c52 318px,#ff183f 354px,#ff072f 401px,#ff0025 441px)"></div>
<div class="s" style="background:linear-gradient(90deg,#00ffec 142px,#01fff0 148px,#2dfffa 163px,#49ffff 171px,#91efff 191px,#fddaff 218px,#ffd7fd 219px,#ffbce2 226px,#ffa5cd 233px,#ff7da6 249px,#ff5c87 268px,#ff416c 291px,#ff2a55 320px,#ff1742 354px,#ff0732 399px,#ff0028 438px)"></div>
<div class="s" style="background:linear-gradient(90deg,#00fff8 142px,#00fffc 148px,#31f6ff 165px,#86e4ff 190px,#ffc9fd 222px,#ff9bce 236px,#ff76a9 252px,#ff5789 271px,#ff3d6f 294px,#ff2758 322px,#ff1545 356px,#ff0634 401px,#ff002b 436px)"></div>
<div class="s" style="background:linear-gradient(90deg,#00f9ff 143px,#01f5ff 149px,#37e8ff 168px,#8ad6ff 193px,#ffbcfd 225px,#ff94d2 238px,#ff70ad 254px,#ff538d 273px,#ff3b73 295px,#ff255c 323px,#ff1449 356px,#ff0637 400px,#ff002e 433px)"></div>
<div class="s" style="background:linear-gradient(90deg,#00eeff 143px,#00eaff 149px,#37dcff 169px,#8acaff 195px,#ffb0fd 228px,#ff8ad4 241px,#ff69af 257px,#ff4f91 275px,#ff3876 297px,#ff245f 324px,#ff144c 356px,#ff053a 399px,#ff0031 430px)"></div>
<div class="s" style="background:linear-gradient(90deg,#00e2ff 144px,#01dfff 150px,#39d1ff 171px,#8ebeff 198px,#ffa4fd 231px,#ff82d5 244px,#ff63b0 260px,#ff4a93 278px,#ff357a 299px,#ff2364 324px,#ff1451 353px,#ff053f 395px,#ff0035 427px)"></div>
<div class="s" style="background:linear-gradient(90deg,#00d8ff 144px,#02d4ff 151px,#39c6ff 172px,#8eb3ff 200px,#ff9afd 234px,#ff7ad6 247px,#ff5eb4 262px,#ff4696 280px,#ff327d 301px,#ff2167 325px,#ff1355 353px,#ff0542 394px,#ff0038 424px)"></div>
<div class="s" style="background:linear-gradient(90deg,#00cfff 145px,#01cbff 151px,#3bbcff 174px,#8ea9ff 202px,#ff90fd 237px,#ff72d7 250px,#ff58b6 265px,#ff4298 283px,#ff2f80 303px,#ff1f6b 326px,#ff1259 353px,#ff0546 393px,#ff003c 421px)"></div>
<div class="s" style="background:linear-gradient(90deg,#00c6ff 145px,#02c1ff 152px,#3bb3ff 175px,#919fff 205px,#ff86fe 240px,#ff6ad8 253px,#ff52b7 268px,#ff3e9c 285px,#ff2c83 305px,#ff1d6e 328px,#ff115c 354px,#ff0449 393px,#ff003f 418px)"></div>
<div class="s" style="background:linear-gradient(90deg,#00bdff 146px,#03b9ff 153px,#40a9ff 178px,#9396ff 208px,#ff7dfe 243px,#ff63d9 256px,#ff4ebb 270px,#ff3b9f 287px,#ff2a87 306px,#ff1c72 328px,#ff1060 353px,#ff044d 391px,#ff0043 415px)"></div>
<div class="s" style="background:linear-gradient(90deg,#00b5ff 146px,#02b1ff 153px,#3ca2ff 178px,#908eff 209px,#ff75fe 246px,#ff5dda 259px,#ff49bc 273px,#ff38a2 289px,#ff288a 308px,#ff1b76 329px,#ff0f64 353px,#ff0350 390px,#ff0047 412px)"></div>
<div class="s" style="background:linear-gradient(90deg,#00adff 147px,#03a9ff 154px,#4199ff 181px,#9386ff 212px,#ff6dfe 249px,#ff58dd 261px,#ff45bf 275px,#ff34a5 291px,#ff268e 309px,#ff1979 330px,#ff0e68 353px,#ff0354 389px,#ff004b 409px)"></div>
<div class="s" style="background:linear-gradient(90deg,#00a6ff 147px,#02a2ff 154px,#4092ff 182px,#937eff 214px,#ff66fe 252px,#ff52de 264px,#ff40c1 278px,#ff30a7 294px,#ff2391 311px,#ff177d 331px,#ff0e6c 353px,#ff0358 387px,#ff004f 406px)"></div>
<div class="s" style="background:linear-gradient(90deg,#00a0ff 147px,#019cff 154px,#3d8cff 182px,#9378ff 216px,#ff5ffe 255px,#ff4cdf 267px,#ff3dc4 280px,#ff2eab 295px,#ff2195 312px,#ff0d70 352px,#ff025c 385px,#ff0053 403px)"></div>
<div class="s" style="background:linear-gradient(90deg,#0099ff 148px,#0096ff 154px,#0495ff 156px,#4284ff 185px,#9570ff 219px,#ff58fe 258px,#ff47df 270px,#ff38c5 283px,#ff2aad 298px,#ff1f98 314px,#ff0c74 352px,#ff0058 400px)"></div>
<div class="s" style="background:linear-gradient(90deg,#0093ff 148px,#038fff 156px,#3f7fff 185px,#956aff 221px,#ff52fe 261px,#ff43e2 272px,#ff35c8 285px,#ff28b1 299px,#ff1d9c 315px,#ff0b78 352px,#ff005c 397px)"></div>
<div class="s" style="background:linear-gradient(90deg,#008dff 149px,#008aff 155px,#0389ff 157px,#4378ff 188px,#9764ff 224px,#ff4cfe 264px,#ff3ee3 275px,#ff31cb 287px,#ff26b4 301px,#ff1ba0 316px,#ff0b7d 351px,#ff0061 394px)"></div>
<div class="s" style="background:linear-gradient(90deg,#0088ff 149px,#0384ff 157px,#4273ff 189px,#975eff 226px,#ff46fe 267px,#ff39e4 278px,#ff2dcc 290px,#ff1aa4 317px,#ff0a82 350px,#ff0066 391px)"></div>
<div class="s" style="background:linear-gradient(90deg,#0082ff 150px,#007fff 156px,#037eff 158px,#446dff 191px,#9759ff 228px,#ff41fe 270px,#ff2acf 292px,#ff18a7 318px,#ff0986 350px,#ff006b 388px)"></div>
<div class="s" style="background:linear-gradient(90deg,#007dff 150px,#0279ff 158px,#4368ff 192px,#9754ff 230px,#ff3cfe 273px,#ff27d1 294px,#ff16aa 320px,#ff088a 350px,#ff0070 386px)"></div>
<div class="s" style="background:linear-gradient(90deg,#0078ff 151px,#0075ff 157px,#0574ff 160px,#4762ff 195px,#9b4eff 234px,#ff37fe 276px,#ff23d2 297px,#ff14ae 321px,#ff088f 349px,#ff0075 383px)"></div>
<div class="s" style="background:linear-gradient(90deg,#0074ff 151px,#0071ff 157px,#046fff 160px,#445eff 195px,#994aff 235px,#ff32fe 279px,#ff21d5 299px,#ff12b2 322px,#ff0794 349px,#ff007b 380px)"></div>
<div class="s" style="background:linear-gradient(90deg,#006fff 152px,#006cff 158px,#056bff 161px,#4759ff 198px,#9b45ff 238px,#ff2eff 282px,#ff1ed7 301px,#ff11b6 323px,#ff0699 348px,#ff0080 377px)"></div>
<div class="s" style="background:linear-gradient(90deg,#006bff 152px,#0068ff 158px,#0467ff 161px,#4755ff 199px,#9a40ff 240px,#ff29ff 285px,#ff1bda 303px,#ff10bb 323px,#ff069e 347px,#ff0086 374px)"></div>
<div class="s" style="background:linear-gradient(90deg,#0067ff 153px,#0064ff 159px,#0662ff 163px,#4850ff 201px,#9c3cff 243px,#ff25ff 288px,#ff19dc 305px,#ff0ebe 324px,#ff05a4 346px,#ff008c 371px)"></div>
<div class="s" style="background:linear-gradient(90deg,#0063ff 153px,#0061ff 159px,#055fff 163px,#484dff 202px,#9c38ff 245px,#ff21ff 291px,#ff16df 307px,#ff0dc2 325px,#ff04a9 345px,#ff0093 368px)"></div>
<div class="s" style="background:linear-gradient(90deg,#005fff 154px,#005dff 160px,#075aff 165px,#4b48ff 205px,#9e34ff 248px,#ff1eff 294px,#ff14e1 309px,#ff0bc6 326px,#ff04af 344px,#ff0099 365px)"></div>
<div class="s" style="background:linear-gradient(90deg,#005cff 154px,#0059ff 160px,#0558ff 164px,#4845ff 205px,#9d30ff 250px,#ff1aff 297px,#ff11e3 311px,#ff0acb 326px,#ff01aa 352px,#ff00a0 362px)"></div>
<div class="s" style="background:linear-gradient(90deg,#0058ff 155px,#0056ff 161px,#0753ff 166px,#4b41ff 208px,#9f2dff 253px,#ff17ff 300px,#ff0fe5 313px,#ff08cf 327px,#ff00a7 359px)"></div>
<div class="s" style="background:linear-gradient(90deg,#0055ff 155px,#0053ff 161px,#0650ff 166px,#4b3eff 209px,#9f29ff 255px,#ff14ff 303px,#ff07d4 327px,#ff00af 356px)"></div>
<div class="s" style="background:linear-gradient(90deg,#0052ff 156px,#004fff 162px,#084dff 168px,#4d3aff 212px,#a026ff 258px,#ff10ff 306px,#ff06d8 328px,#ff00b6 353px)"></div>
<div class="s" style="background:linear-gradient(90deg,#004fff 156px,#004cff 162px,#074aff 168px,#4b37ff 212px,#9e23ff 259px,#ff0eff 309px,#ff05dd 328px,#ff00be 350px)"></div>
<div class="s" style="background:linear-gradient(90deg,#004cff 157px,#0049ff 163px,#0946ff 170px,#4e34ff 215px,#a120ff 263px,#ff0bff 312px,#ff03e1 329px,#ff00c7 347px)"></div>
<div class="s" style="background:linear-gradient(90deg,#0049ff 157px,#0047ff 163px,#0744ff 169px,#4c32ff 215px,#9f1dff 264px,#ff08ff 315px,#ff00d0 344px)"></div>
<div class="s" style="background:linear-gradient(90deg,#0046ff 158px,#0044ff 164px,#0941ff 171px,#4e2eff 218px,#a11aff 267px,#ff06ff 318px,#ff00d9 341px)"></div>
<div class="s" style="background:linear-gradient(90deg,#0044ff 158px,#0041ff 164px,#083fff 171px,#4e2cff 219px,#a018ff 269px,#ff03ff 321px,#ff00e2 338px)"></div>
<div class="s" style="background:linear-gradient(90deg,#0041ff 159px,#003fff 165px,#0a3cff 173px,#5029ff 222px,#a215ff 272px,#ff01ff 324px,#ff00ea 336px)"></div>
<div class="s" style="background:linear-gradient(90deg,#003fff 159px,#003cff 165px,#043bff 169px,#392cff 208px,#9416ff 266px,#ff00ff 327px,#ff00f4 333px)"></div>
<div class="s" style="background:linear-gradient(90deg,#003cff 160px,#003aff 166px,#0b36ff 175px,#5124ff 225px,#a310ff 277px,#ed00ff 320px,#ff00ff 330px)"></div>
<div class="s" style="background:linear-gradient(90deg,#003aff 160px,#0038ff 166px,#0835ff 173px,#4a23ff 222px,#9a10ff 274px,#e300ff 317px,#f400ff 327px)"></div>
<div class="s" style="background:linear-gradient(90deg,#0037ff 161px,#0035ff 167px,#0833ff 174px,#4821ff 222px,#940fff 272px,#d900ff 314px,#ea00ff 324px)"></div>
<div class="s" style="background:linear-gradient(90deg,#0035ff 161px,#0033ff 167px,#0631ff 173px,#4221ff 219px,#8c0fff 269px,#d100ff 312px,#e000ff 321px)"></div>
<div class="s" style="background:linear-gradient(90deg,#0033ff 162px,#0031ff 168px,#072fff 174px,#401fff 219px,#860eff 267px,#c800ff 309px,#d700ff 318px)"></div>
<div class="s" style="background:linear-gradient(90deg,#0031ff 162px,#002fff 168px,#052dff 173px,#3b1fff 216px,#7f0eff 264px,#bf00ff 306px,#cd00ff 315px)"></div>
<div class="s" style="background:linear-gradient(90deg,#002fff 163px,#002dff 169px,#062bff 174px,#391dff 216px,#7a0dff 263px,#c500ff 312px)"></div>
<div class="s" style="background:linear-gradient(90deg,#002dff 163px,#002bff 169px,#042aff 173px,#341dff 213px,#740dff 260px,#bc00ff 309px)"></div>
<div class="s" style="background:linear-gradient(90deg,#002bff 164px,#0428ff 174px,#321bff 213px,#6e0cff 258px,#b400ff 306px)"></div>
<div class="s" style="background:linear-gradient(90deg,#002aff 164px,#0327ff 173px,#2e1aff 211px,#690cff 256px,#ac00ff 303px)"></div>
<div class="s" style="background:linear-gradient(90deg,#0028ff 164px,#0225ff 173px,#2a1aff 208px,#620cff 252px,#a400ff 300px)"></div>
<div class="s" style="background:linear-gradient(90deg,#0026ff 165px,#0224ff 173px,#2819ff 208px,#5e0bff 251px,#9d00ff 297px)"></div>
<div class="s" style="background:linear-gradient(90deg,#0025ff 165px,#0122ff 173px,#2418ff 205px,#580bff 248px,#9600ff 294px)"></div>
<div class="s" style="background:linear-gradient(90deg,#0023ff 166px,#0221ff 174px,#2317ff 205px,#540bff 246px,#8f00ff 291px)"></div>
<div class="s" style="background:linear-gradient(90deg,#0022ff 166px,#011fff 174px,#1f16ff 203px,#8800ff 288px)"></div>
<div class="s" style="background:linear-gradient(90deg,#0020ff 167px,#011eff 174px,#1e15ff 203px,#7201ff 273px,#8300ff 286px)"></div>
<div class="s" style="background:linear-gradient(90deg,#001fff 167px,#011dff 174px,#1b15ff 201px,#7d00ff 283px)"></div>
<div class="s" style="background:linear-gradient(90deg,#001dff 168px,#011bff 175px,#1b13ff 201px,#7700ff 280px)"></div>
<div class="s" style="background:linear-gradient(90deg,#001cff 168px,#011aff 175px,#1813ff 199px,#7100ff 277px)"></div>
<div class="s" style="background:linear-gradient(90deg,#001aff 169px,#0019ff 175px,#1712ff 199px,#6b00ff 274px)"></div>
<div class="s" style="background:linear-gradient(90deg,#0019ff 169px,#0117ff 176px,#1411ff 197px,#6500ff 271px)"></div>
<div class="s" style="background:linear-gradient(90deg,#0018ff 170px,#0016ff 176px,#1310ff 197px,#6000ff 268px)"></div>
<div class="s" style="background:linear-gradient(90deg,#0017ff 170px,#0115ff 177px,#1110ff 195px,#5b00ff 265px)"></div>
<div class="s" style="background:linear-gradient(90deg,#0015ff 171px,#0014ff 177px,#100fff 195px,#5600ff 262px)"></div>
<div class="s" style="background:linear-gradient(90deg,#0014ff 171px,#0112ff 178px,#0d0eff 193px,#5100ff 259px)"></div>
<div class="s" style="background:linear-gradient(90deg,#0013ff 172px,#0011ff 178px,#0d0dff 193px,#4c00ff 256px)"></div>
<div class="s" style="background:linear-gradient(90deg,#0012ff 172px,#0110ff 179px,#0a0dff 191px,#4800ff 253px)"></div>
<div class="s" style="background:linear-gradient(90deg,#0011ff 173px,#000fff 179px,#0a0cff 191px,#4300ff 250px)"></div>
<div class="s" style="background:linear-gradient(90deg,#0010ff 173px,#000eff 179px,#090bff 190px,#3f00ff 247px)"></div>
<div class="s" style="background:linear-gradient(90deg,#000eff 174px,#000dff 180px,#080bff 190px,#3b00ff 244px)"></div>
<div class="s" style="background:linear-gradient(90deg,#000eff 174px,#000cff 180px,#060aff 188px,#3600ff 241px)"></div>
<div class="s" style="background:linear-gradient(90deg,#000cff 175px,#000bff 181px,#0509ff 188px,#3200ff 238px)"></div>
<div class="s" style="background:linear-gradient(90deg,#000cff 175px,#0409ff 187px,#2f00ff 235px)"></div>
<div class="s" style="background:linear-gradient(90deg,#000bff 176px,#0508ff 188px,#2c00ff 233px)"></div>
<div class="s" style="background:linear-gradient(90deg,#000aff 176px,#0307ff 187px,#2800ff 230px)"></div>
<div class="s" style="background:linear-gradient(90deg,#0009ff 177px,#0307ff 187px,#2400ff 227px)"></div>
<div class="s" style="background:linear-gradient(90deg,#0008ff 177px,#0206ff 186px,#2100ff 224px)"></div>
<div class="s" style="background:linear-gradient(90deg,#0007ff 178px,#0205ff 186px,#1e00ff 221px)"></div>
<div class="s" style="background:linear-gradient(90deg,#0006ff 178px,#0105ff 186px,#1a00ff 218px)"></div>
<div class="s" style="background:linear-gradient(90deg,#0005ff 179px,#0104ff 186px,#1700ff 215px)"></div>
<div class="s" style="background:linear-gradient(90deg,#0005ff 179px,#0103ff 186px,#1400ff 212px)"></div>
<div class="s" style="background:linear-gradient(90deg,#0004ff 180px,#0003ff 186px,#1100ff 209px)"></div>
<div class="s" style="background:linear-gradient(90deg,#0003ff 180px,#0002ff 186px,#0e00ff 206px)"></div>
<div class="s" style="background:linear-gradient(90deg,#0003ff 181px,#0001ff 187px,#0b00ff 203px)"></div>
<div class="s" style="background:linear-gradient(90deg,#0002ff 181px,#0001ff 187px,#0900ff 200px)"></div>
<div class="s" style="background:linear-gradient(90deg,#0001ff 182px,#0600ff 197px)"></div>
<div class="s" style="background:linear-gradient(90deg,#0001ff 182px,#0400ff 194px)"></div>
<div class="s"></div>
<div class="s"></div>
<div class="s"></div>
<div class="s"></div>
<div class="s"></div>
<div class="s"></div>
<div class="s"></div>
<div class="s"></div>
<div class="s"></div>
<div class="s"></div>
<div class="s"></div>
<div class="s"></div>
<div class="s"></div>
<div class="s"></div>
<div class="s"></div>
<div class="s"></div>
<div class="s"></div>
<div class="s"></div>
<div class="s"></div>
<div class="s"></div>
<div class="s"></div>
<div class="s"></div>
<div class="s"></div>
<div class="s"></div>
<div class="s"></div>
<div class="s"></div>
<div class="s"></div>
<div class="s"></div>
<div class="s"></div>
<div class="s"></div>
<div class="s"></div>
<div class="s"></div>
<div class="s"></div>
<div class="s"></div>
<div class="s"></div>
<div class="s"></div>
<div class="s"></div>
<div class="s"></div>
<div class="s"></div>
<div class="s"></div>
<div class="s"></div>
<div class="s"></div>
<div class="s"></div>
</div></div>
</div>
<div class="a" style="left:1452.1px;top:438.1px;width:197.8px;height:130.2px;overflow:hidden">
<div class="a" style="left:-6px;top:-6px;width:210px;filter:blur(1px)">
<div class="s" style="background:linear-gradient(90deg,#649e00 0px,#9e9e00 169px,#9e9000 210px)"></div>
<div class="s" style="background:linear-gradient(90deg,#659e00 0px,#9e9e00 166px,#9e8f00 210px)"></div>
<div class="s" style="background:linear-gradient(90deg,#659e00 0px,#9e9e00 163px,#9e8e00 210px)"></div>
<div class="s" style="background:linear-gradient(90deg,#669e00 0px,#9e9e00 160px,#9e8d00 210px)"></div>
<div class="s" style="background:linear-gradient(90deg,#679e00 0px,#9e9e00 158px,#9e8c00 210px)"></div>
<div class="s" style="background:linear-gradient(90deg,#689e00 0px,#9e9e00 155px,#9e8b00 210px)"></div>
<div class="s" style="background:linear-gradient(90deg,#689e00 0px,#9e9e00 152px,#9e8a00 210px)"></div>
<div class="s" style="background:linear-gradient(90deg,#699e01 0px,#9e9e00 150px,#9e8900 210px)"></div>
<div class="s" style="background:linear-gradient(90deg,#6a9e01 0px,#9e9e00 147px,#9e8800 210px)"></div>
<div class="s" style="background:linear-gradient(90deg,#6b9e01 0px,#9e9e00 144px,#9e8800 210px)"></div>
<div class="s" style="background:linear-gradient(90deg,#6c9e01 0px,#9e9e00 141px,#9e8700 210px)"></div>
<div class="s" style="background:linear-gradient(90deg,#6c9e02 0px,#9e9e00 139px,#9e8600 210px)"></div>
<div class="s" style="background:linear-gradient(90deg,#6d9e02 0px,#9e9e00 136px,#9e8500 210px)"></div>
<div class="s" style="background:linear-gradient(90deg,#6e9e02 0px,#9e9e00 133px,#9e8400 210px)"></div>
<div class="s" style="background:linear-gradient(90deg,#6f9e03 0px,#9e9e00 130px,#9e8300 210px)"></div>
<div class="s" style="background:linear-gradient(90deg,#709e03 0px,#9e9e00 128px,#9e8200 210px)"></div>
<div class="s" style="background:linear-gradient(90deg,#709e04 0px,#9e9e00 125px,#9e8100 210px)"></div>
<div class="s" style="background:linear-gradient(90deg,#719e04 0px,#9e9e00 122px,#9e8000 210px)"></div>
<div class="s" style="background:linear-gradient(90deg,#729e04 0px,#9e9e00 119px,#9e8000 210px)"></div>
<div class="s" style="background:linear-gradient(90deg,#739e05 0px,#9e9e00 117px,#9e7f00 210px)"></div>
<div class="s" style="background:linear-gradient(90deg,#749e05 0px,#9e9e00 114px,#9e7e00 210px)"></div>
<div class="s" style="background:linear-gradient(90deg,#759e05 0px,#9e9e00 111px,#9e7d00 210px)"></div>
<div class="s" style="background:linear-gradient(90deg,#759e06 0px,#9e9e00 108px,#9e7c00 210px)"></div>
<div class="s" style="background:linear-gradient(90deg,#769e06 0px,#9e9e00 106px,#9e7b00 210px)"></div>
<div class="s" style="background:linear-gradient(90deg,#779e07 0px,#9e9e00 103px,#9e7b00 210px)"></div>
<div class="s" style="background:linear-gradient(90deg,#789e07 0px,#9e9e01 100px,#9e7a00 210px)"></div>
<div class="s" style="background:linear-gradient(90deg,#799e07 0px,#9e9e01 97px,#9e7900 210px)"></div>
<div class="s" style="background:linear-gradient(90deg,#7a9e08 0px,#9e9e02 95px,#9e7800 210px)"></div>
<div class="s" style="background:linear-gradient(90deg,#7b9e08 0px,#9e9e02 92px,#9e7700 210px)"></div>
<div class="s" style="background:linear-gradient(90deg,#7c9e09 0px,#9e9e03 89px,#9e7600 210px)"></div>
<div class="s" style="background:linear-gradient(90deg,#7d9e09 0px,#9e9e04 86px,#9e7600 210px)"></div>
<div class="s" style="background:linear-gradient(90deg,#7e9e09 0px,#9e9e04 84px,#9e8800 144px,#9e7500 210px)"></div>
<div class="s" style="background:linear-gradient(90deg,#7e9e0a 0px,#9e9e05 81px,#9e8801 142px,#9e7400 210px)"></div>
<div class="s" style="background:linear-gradient(90deg,#7f9e0a 0px,#9e9e05 78px,#9e8701 140px,#9e7300 210px)"></div>
<div class="s" style="background:linear-gradient(90deg,#809e0b 0px,#9e9e06 75px,#9e8701 139px,#9e7200 210px)"></div>
<div class="s" style="background:linear-gradient(90deg,#819e0b 0px,#9e9e06 73px,#9e8602 137px,#9e7200 210px)"></div>
<div class="s" style="background:linear-gradient(90deg,#829e0c 0px,#9e9e07 70px,#9e8602 136px,#9e7100 210px)"></div>
<div class="s" style="background:linear-gradient(90deg,#839e0c 0px,#9e9e08 67px,#9e8603 134px,#9e7000 210px)"></div>
<div class="s" style="background:linear-gradient(90deg,#849e0d 0px,#9e9e08 65px,#9e8503 133px,#9e6f00 210px)"></div>
<div class="s" style="background:linear-gradient(90deg,#859e0d 0px,#9e9e09 62px,#9e8504 131px,#9e6e00 210px)"></div>
<div class="s" style="background:linear-gradient(90deg,#869e0e 0px,#9e9e0a 59px,#9e8404 130px,#9e6e00 210px)"></div>
<div class="s" style="background:linear-gradient(90deg,#879e0e 0px,#9e9e0a 56px,#9e8404 128px,#9e6d00 210px)"></div>
<div class="s" style="background:linear-gradient(90deg,#889e0f 0px,#9e9e0b 54px,#9e8305 127px,#9e6c00 210px)"></div>
<div class="s" style="background:linear-gradient(90deg,#899e0f 0px,#9e9e0c 51px,#9e8305 125px,#9e6b00 210px)"></div>
<div class="s" style="background:linear-gradient(90deg,#8a9e10 0px,#9e9e0c 48px,#9e8206 123px,#9e6a01 210px)"></div>
<div class="s" style="background:linear-gradient(90deg,#8b9e10 0px,#9e9e0d 45px,#9e8206 122px,#9e6a01 210px)"></div>
<div class="s" style="background:linear-gradient(90deg,#8c9e11 0px,#9e9e0e 43px,#9e8107 120px,#9e6901 210px)"></div>
<div class="s" style="background:linear-gradient(90deg,#8e9e11 0px,#9e9e0e 40px,#9e8107 119px,#9e6801 210px)"></div>
</div>
<div class="a" style="left:-6px;top:-6px;width:210px;height:143px;clip-path:polygon(920.9px 497.7px,-336.2px -159.4px,-890.8px 1154.8px)">
<div style="filter:blur(1px)">
<div class="s"></div>
<div class="s"></div>
<div class="s"></div>
<div class="s"></div>
<div class="s"></div>
<div class="s" style="background:linear-gradient(90deg,#a7ff00 0px,#adff00 11px)"></div>
<div class="s" style="background:linear-gradient(90deg,#a8ff00 0px,#b1ff00 16px)"></div>
<div class="s" style="background:linear-gradient(90deg,#aaff01 0px,#b5ff00 22px)"></div>
<div class="s" style="background:linear-gradient(90deg,#abff01 0px,#baff00 28px)"></div>
<div class="s" style="background:linear-gradient(90deg,#acff02 0px,#beff00 34px)"></div>
<div class="s" style="background:linear-gradient(90deg,#adff02 0px,#c3ff00 39px)"></div>
<div class="s" style="background:linear-gradient(90deg,#afff03 0px,#c7ff00 45px)"></div>
<div class="s" style="background:linear-gradient(90deg,#b0ff03 0px,#ccff00 51px)"></div>
<div class="s" style="background:linear-gradient(90deg,#b1ff04 0px,#d1ff00 57px)"></div>
<div class="s" style="background:linear-gradient(90deg,#b3ff05 0px,#d5ff00 62px)"></div>
<div class="s" style="background:linear-gradient(90deg,#b4ff05 0px,#dbff00 68px)"></div>
<div class="s" style="background:linear-gradient(90deg,#b5ff06 0px,#e0ff00 74px)"></div>
<div class="s" style="background:linear-gradient(90deg,#b7ff06 0px,#e5ff00 80px)"></div>
<div class="s" style="background:linear-gradient(90deg,#b8ff07 0px,#e9ff00 85px)"></div>
<div class="s" style="background:linear-gradient(90deg,#b9ff07 0px,#efff00 91px)"></div>
<div class="s" style="background:linear-gradient(90deg,#bbff08 0px,#f4ff00 97px)"></div>
<div class="s" style="background:linear-gradient(90deg,#bcff09 0px,#f9ff00 102px)"></div>
<div class="s" style="background:linear-gradient(90deg,#bdff09 0px,#ffff00 108px)"></div>
<div class="s" style="background:linear-gradient(90deg,#bfff0a 0px,#ffff00 105px,#fffa00 114px)"></div>
<div class="s" style="background:linear-gradient(90deg,#c0ff0b 0px,#ffff01 103px,#fff400 120px)"></div>
<div class="s" style="background:linear-gradient(90deg,#c2ff0b 0px,#ffff01 100px,#fff000 125px)"></div>
<div class="s" style="background:linear-gradient(90deg,#c3ff0c 0px,#ffff02 97px,#ffea00 131px)"></div>
<div class="s" style="background:linear-gradient(90deg,#c4ff0d 0px,#ffff03 94px,#ffe500 137px)"></div>
<div class="s" style="background:linear-gradient(90deg,#c6ff0d 0px,#ffff04 92px,#ffe100 143px)"></div>
<div class="s" style="background:linear-gradient(90deg,#c7ff0e 0px,#ffff05 89px,#ffdc00 148px)"></div>
<div class="s" style="background:linear-gradient(90deg,#c9ff0f 0px,#ffff06 86px,#ffd800 154px)"></div>
<div class="s" style="background:linear-gradient(90deg,#caff0f 0px,#ffff07 84px,#ffd300 160px)"></div>
<div class="s" style="background:linear-gradient(90deg,#ccff10 0px,#ffff08 81px,#ffcf00 166px)"></div>
<div class="s" style="background:linear-gradient(90deg,#cdff11 0px,#ffff09 78px,#ffe403 123px,#ffcb00 171px)"></div>
<div class="s" style="background:linear-gradient(90deg,#cfff11 0px,#ffff0a 75px,#ffe104 125px,#ffc700 177px)"></div>
<div class="s" style="background:linear-gradient(90deg,#d1ff12 0px,#ffff0a 73px,#ffdf04 125px,#ffc300 183px)"></div>
<div class="s" style="background:linear-gradient(90deg,#d2ff13 0px,#ffff0b 70px,#ffdd05 126px,#ffbf00 189px)"></div>
<div class="s" style="background:linear-gradient(90deg,#d4ff14 0px,#ffff0c 67px,#ffdb05 127px,#ffbb00 194px)"></div>
<div class="s" style="background:linear-gradient(90deg,#d5ff14 0px,#ffff0e 64px,#ffd805 129px,#ffb700 200px)"></div>
<div class="s" style="background:linear-gradient(90deg,#d7ff15 0px,#ffff0e 62px,#ffd706 129px,#ffb400 206px)"></div>
<div class="s" style="background:linear-gradient(90deg,#d9ff16 0px,#ffff10 59px,#ffd506 130px,#ffb100 210px)"></div>
<div class="s" style="background:linear-gradient(90deg,#daff17 0px,#ffff11 56px,#ffd407 128px,#ffaf00 210px)"></div>
<div class="s" style="background:linear-gradient(90deg,#dcff17 0px,#ffff12 54px,#ffd308 127px,#ffae00 210px)"></div>
<div class="s" style="background:linear-gradient(90deg,#ddff18 0px,#ffff13 51px,#ffd309 125px,#ffad01 210px)"></div>
<div class="s" style="background:linear-gradient(90deg,#dfff19 0px,#ffff14 48px,#ffd209 123px,#ffac01 210px)"></div>
<div class="s" style="background:linear-gradient(90deg,#e1ff1a 0px,#ffff15 45px,#ffd10a 122px,#ffaa01 210px)"></div>
<div class="s" style="background:linear-gradient(90deg,#e3ff1b 0px,#fffe16 43px,#ffd10b 120px,#ffa902 210px)"></div>
<div class="s" style="background:linear-gradient(90deg,#e4ff1b 0px,#ffff17 40px,#ffd00c 119px,#ffa802 210px)"></div>
</div></div></div>
<svg id="ov" width="1667" height="1005" viewBox="0 0 1667 1005">
<defs>
<linearGradient id="tabg" x1="0" y1="0" x2="0" y2="1"><stop offset="0" stop-color="#4d4d4d"/><stop offset="1" stop-color="#3a3a3a"/></linearGradient>
<linearGradient id="tabg2" x1="0" y1="0" x2="0" y2="1"><stop offset="0" stop-color="#484848"/><stop offset="1" stop-color="#3c3c3c"/></linearGradient>
<radialGradient id="plusc" cx="0.5" cy="0.65" r="0.6"><stop offset="0" stop-color="#474747"/><stop offset="1" stop-color="#3b3b3b"/></radialGradient>
<linearGradient id="devg" x1="0" y1="0" x2="0" y2="1"><stop offset="0" stop-color="#5a5a5a"/><stop offset="1" stop-color="#6e6e6e"/></linearGradient>
<radialGradient id="ddc" cx="0.5" cy="0.95" r="0.9"><stop offset="0" stop-color="#7a7a7a"/><stop offset="1" stop-color="#4e4e4e"/></radialGradient>
<linearGradient id="btng" x1="0" y1="0" x2="0" y2="1"><stop offset="0" stop-color="#7d7d7d"/><stop offset="1" stop-color="#5f5f5f"/></linearGradient>
<linearGradient id="btnc" x1="0" y1="0" x2="0" y2="1"><stop offset="0" stop-color="#4e4e4e"/><stop offset="0.5" stop-color="#646464"/><stop offset="1" stop-color="#8a8a8a"/></linearGradient>
<linearGradient id="b0" x1="0" y1="0" x2="1" y2="0"><stop offset="0" stop-color="#ffff28"/><stop offset="0.25" stop-color="#ffff00"/><stop offset="1" stop-color="#949400"/></linearGradient>
<linearGradient id="b1" x1="0" y1="0" x2="1" y2="0"><stop offset="0" stop-color="#ff28ff"/><stop offset="0.25" stop-color="#ff00ff"/><stop offset="1" stop-color="#940094"/></linearGradient>
<linearGradient id="b2" x1="0" y1="0" x2="1" y2="0"><stop offset="0" stop-color="#28ffff"/><stop offset="0.25" stop-color="#00ffff"/><stop offset="1" stop-color="#009494"/></linearGradient>
<linearGradient id="b3" x1="0" y1="0" x2="1" y2="0"><stop offset="0" stop-color="#2828ff"/><stop offset="0.25" stop-color="#0000ff"/><stop offset="1" stop-color="#000094"/></linearGradient>
<linearGradient id="b4" x1="0" y1="0" x2="1" y2="0"><stop offset="0" stop-color="#28ff28"/><stop offset="0.25" stop-color="#00ff00"/><stop offset="1" stop-color="#009400"/></linearGradient>
<linearGradient id="b5" x1="0" y1="0" x2="1" y2="0"><stop offset="0" stop-color="#ff2828"/><stop offset="0.25" stop-color="#ff0000"/><stop offset="1" stop-color="#940000"/></linearGradient>
<linearGradient id="b6" x1="0" y1="0" x2="1" y2="0"><stop offset="0" stop-color="#30adc9"/><stop offset="0.25" stop-color="#0885a1"/><stop offset="1" stop-color="#054d5d"/></linearGradient>
<linearGradient id="b7" x1="0" y1="0" x2="1" y2="0"><stop offset="0" stop-color="#e37ebd"/><stop offset="0.25" stop-color="#bb5695"/><stop offset="1" stop-color="#6c3256"/></linearGradient>
<linearGradient id="b8" x1="0" y1="0" x2="1" y2="0"><stop offset="0" stop-color="#ffef47"/><stop offset="0.25" stop-color="#e7c71f"/><stop offset="1" stop-color="#867312"/></linearGradient>
<linearGradient id="b9" x1="0" y1="0" x2="1" y2="0"><stop offset="0" stop-color="#d75e64"/><stop offset="0.25" stop-color="#af363c"/><stop offset="1" stop-color="#661f23"/></linearGradient>
<linearGradient id="b10" x1="0" y1="0" x2="1" y2="0"><stop offset="0" stop-color="#6ebc71"/><stop offset="0.25" stop-color="#469449"/><stop offset="1" stop-color="#29562a"/></linearGradient>
<linearGradient id="b11" x1="0" y1="0" x2="1" y2="0"><stop offset="0" stop-color="#6065be"/><stop offset="0.25" stop-color="#383d96"/><stop offset="1" stop-color="#202357"/></linearGradient>
<linearGradient id="b12" x1="0" y1="0" x2="1" y2="0"><stop offset="0" stop-color="#ffcb56"/><stop offset="0.25" stop-color="#e0a32e"/><stop offset="1" stop-color="#825f1b"/></linearGradient>
<linearGradient id="b13" x1="0" y1="0" x2="1" y2="0"><stop offset="0" stop-color="#c5e468"/><stop offset="0.25" stop-color="#9dbc40"/><stop offset="1" stop-color="#5b6d25"/></linearGradient>
<linearGradient id="b14" x1="0" y1="0" x2="1" y2="0"><stop offset="0" stop-color="#866494"/><stop offset="0.25" stop-color="#5e3c6c"/><stop offset="1" stop-color="#37233f"/></linearGradient>
<linearGradient id="b15" x1="0" y1="0" x2="1" y2="0"><stop offset="0" stop-color="#e9828b"/><stop offset="0.25" stop-color="#c15a63"/><stop offset="1" stop-color="#703439"/></linearGradient>
<linearGradient id="b16" x1="0" y1="0" x2="1" y2="0"><stop offset="0" stop-color="#7883ce"/><stop offset="0.25" stop-color="#505ba6"/><stop offset="1" stop-color="#2e3560"/></linearGradient>
<linearGradient id="b17" x1="0" y1="0" x2="1" y2="0"><stop offset="0" stop-color="#fea654"/><stop offset="0.25" stop-color="#d67e2c"/><stop offset="1" stop-color="#7c491a"/></linearGradient>
<linearGradient id="b18" x1="0" y1="0" x2="1" y2="0"><stop offset="0" stop-color="#8fe5d2"/><stop offset="0.25" stop-color="#67bdaa"/><stop offset="1" stop-color="#3c6e63"/></linearGradient>
<linearGradient id="b19" x1="0" y1="0" x2="1" y2="0"><stop offset="0" stop-color="#ada8d9"/><stop offset="0.25" stop-color="#8580b1"/><stop offset="1" stop-color="#4d4a67"/></linearGradient>
<linearGradient id="b20" x1="0" y1="0" x2="1" y2="0"><stop offset="0" stop-color="#7f946b"/><stop offset="0.25" stop-color="#576c43"/><stop offset="1" stop-color="#323f27"/></linearGradient>
<linearGradient id="b21" x1="0" y1="0" x2="1" y2="0"><stop offset="0" stop-color="#8aa2c5"/><stop offset="0.25" stop-color="#627a9d"/><stop offset="1" stop-color="#39475b"/></linearGradient>
<linearGradient id="b22" x1="0" y1="0" x2="1" y2="0"><stop offset="0" stop-color="#eabeaa"/><stop offset="0.25" stop-color="#c29682"/><stop offset="1" stop-color="#71574b"/></linearGradient>
<linearGradient id="b23" x1="0" y1="0" x2="1" y2="0"><stop offset="0" stop-color="#9b7a6c"/><stop offset="0.25" stop-color="#735244"/><stop offset="1" stop-color="#433027"/></linearGradient>
<linearGradient id="b24" x1="0" y1="0" x2="1" y2="0"><stop offset="0" stop-color="#000000"/><stop offset="0.25" stop-color="#000000"/><stop offset="1" stop-color="#000000"/></linearGradient>
<linearGradient id="b25" x1="0" y1="0" x2="1" y2="0"><stop offset="0" stop-color="#c6c6c6"/><stop offset="0.25" stop-color="#9e9e9e"/><stop offset="1" stop-color="#5c5c5c"/></linearGradient>
<linearGradient id="b26" x1="0" y1="0" x2="1" y2="0"><stop offset="0" stop-color="#e2e2e2"/><stop offset="0.25" stop-color="#bababa"/><stop offset="1" stop-color="#6c6c6c"/></linearGradient>
<linearGradient id="b27" x1="0" y1="0" x2="1" y2="0"><stop offset="0" stop-color="#f9f9f9"/><stop offset="0.25" stop-color="#d1d1d1"/><stop offset="1" stop-color="#797979"/></linearGradient>
<linearGradient id="b28" x1="0" y1="0" x2="1" y2="0"><stop offset="0" stop-color="#ffffff"/><stop offset="0.25" stop-color="#e6e6e6"/><stop offset="1" stop-color="#858585"/></linearGradient>
<linearGradient id="b29" x1="0" y1="0" x2="1" y2="0"><stop offset="0" stop-color="#ffffff"/><stop offset="0.25" stop-color="#ffffff"/><stop offset="1" stop-color="#949494"/></linearGradient>
<linearGradient id="ybar" x1="0" y1="0" x2="0" y2="1"><stop offset="0" stop-color="#ffff58"/><stop offset="0.22" stop-color="#ffff08"/><stop offset="0.5" stop-color="#f6f600"/><stop offset="0.78" stop-color="#b4b400"/><stop offset="1" stop-color="#646400"/></linearGradient>
<linearGradient id="pbg" x1="0" y1="0" x2="0" y2="1"><stop offset="0" stop-color="#a2a2a2"/><stop offset="0.08" stop-color="#969696"/><stop offset="0.5" stop-color="#868686"/><stop offset="1" stop-color="#6c6c6c"/></linearGradient>
<linearGradient id="pbs" x1="0" y1="0" x2="0" y2="1"><stop offset="0" stop-color="#1a1a1a"/><stop offset="1" stop-color="#2a2a2a"/></linearGradient>
<linearGradient id="tb1" x1="0" y1="0" x2="0" y2="1"><stop offset="0" stop-color="#b2b2b2"/><stop offset="0.06" stop-color="#a6a6a6"/><stop offset="0.5" stop-color="#8a8a8a"/><stop offset="1" stop-color="#666666"/></linearGradient>
<linearGradient id="tb2" x1="0" y1="0" x2="0" y2="1"><stop offset="0" stop-color="#b8b8b8"/><stop offset="0.06" stop-color="#a8a8a8"/><stop offset="0.5" stop-color="#8e8e8e"/><stop offset="1" stop-color="#6c6c6c"/></linearGradient>
<linearGradient id="tbd" x1="0" y1="0" x2="0" y2="1"><stop offset="0" stop-color="#4a4a4a"/><stop offset="1" stop-color="#2a2a2a"/></linearGradient>
<linearGradient id="tc" x1="0" y1="0" x2="0" y2="1"><stop offset="0" stop-color="#868686"/><stop offset="0.45" stop-color="#9a9a9a"/><stop offset="1" stop-color="#b2b2b2"/></linearGradient>
<linearGradient id="tcd" x1="0" y1="0" x2="0" y2="1"><stop offset="0" stop-color="#2c2c2c"/><stop offset="1" stop-color="#3c3c3c"/></linearGradient>
<linearGradient id="tbu" x1="0" y1="0" x2="0" y2="1"><stop offset="0" stop-color="#a8a8a8"/><stop offset="0.1" stop-color="#9e9e9e"/><stop offset="1" stop-color="#888888"/></linearGradient>
<linearGradient id="tbs" x1="0" y1="0" x2="0" y2="1"><stop offset="0" stop-color="#949494"/><stop offset="1" stop-color="#6a6a6a"/></linearGradient>
<linearGradient id="tcu" x1="0" y1="0" x2="0" y2="1"><stop offset="0" stop-color="#787878"/><stop offset="1" stop-color="#9c9c9c"/></linearGradient>
<linearGradient id="fade" x1="0" y1="0" x2="1" y2="0"><stop offset="0" stop-color="#1e1e1e" stop-opacity="0"/><stop offset="1" stop-color="#1e1e1e" stop-opacity="0.9"/></linearGradient>
</defs>
<rect x="0" y="0" width="1667" height="36.5" fill="#232323"/>
<rect x="0" y="0" width="71.5" height="36" fill="url(#tabg)"/>
<path d="M72.5 0H108.5Q112.5 0 112.5 4V36H72.5Z" fill="url(#tabg2)"/>
<line x1="72" y1="0" x2="72" y2="36" stroke="#9a9a9a" stroke-width="1.1"/>
<path d="M108.5 0.5Q112.5 0.5 112.5 5V36" fill="none" stroke="#8c8c8c" stroke-width="1.1"/>
<text x="5.8" y="24" font-size="14.2" fill="#e8e8e8" textLength="57.8" lengthAdjust="spacingAndGlyphs">History 1</text>
<circle cx="90.6" cy="19.8" r="12.6" fill="url(#plusc)"/>
<line x1="86.6" y1="21.6" x2="94.6" y2="21.6" stroke="#9a9a9a" stroke-width="1.1"/>
<line x1="90.6" y1="17.6" x2="90.6" y2="25.6" stroke="#9a9a9a" stroke-width="1.1"/>
<path d="M1053 36V5Q1053 0 1058 0H1226Q1231 0 1231 5V36Z" fill="url(#devg)"/>
<path d="M1053 36V5Q1053 0 1058 0H1060V36Z" fill="#12d212"/>
<line x1="1186" y1="2" x2="1186" y2="36" stroke="#3c3c3c" stroke-width="1.4"/>
<circle cx="1162.3" cy="17.5" r="12" fill="url(#ddc)"/>
<path d="M1156.8 16h11l-5.5 6.2z" fill="#fff"/>
<circle cx="1212.4" cy="17.5" r="15.4" fill="#0000f0" stroke="#e6e6ff" stroke-width="1.3"/>
<text x="1212.5" y="21.7" font-size="12.6" fill="#fff" text-anchor="middle" textLength="18.6" lengthAdjust="spacingAndGlyphs" stroke="#fff" stroke-width="0.35">676</text>
<text x="1064" y="12.7" font-size="12.8" fill="#ececec" textLength="81.6" lengthAdjust="spacingAndGlyphs">X-Rite i1Pro 3</text>
<text x="1064" y="31.9" font-size="12.8" fill="#ececec" textLength="69.5" lengthAdjust="spacingAndGlyphs">Direct View</text>
<path d="M1239 36V5Q1239 0 1244 0H1396Q1401 0 1401 5V36Z" fill="url(#devg)"/>
<path d="M1239 36V5Q1239 0 1244 0H1246V36Z" fill="#12d212"/>
<circle cx="1381.2" cy="17.5" r="12" fill="url(#ddc)"/>
<path d="M1375.7 16h11l-5.5 6.2z" fill="#fff"/>
<text x="1250.5" y="12.7" font-size="12.8" fill="#ececec" textLength="79.3" lengthAdjust="spacingAndGlyphs">Mobile Forge</text>
<path d="M1409.4 36V5Q1409.4 0 1414.4 0H1583Q1588 0 1588 5V36Z" fill="url(#devg)"/>
<path d="M1409.4 36V5Q1409.4 0 1414.4 0H1416.4V36Z" fill="#e6e600"/>
<circle cx="1567.7" cy="17.5" r="12" fill="url(#ddc)"/>
<path d="M1562.2 16h11l-5.5 6.2z" fill="#fff"/>
<text x="1420.3" y="12.7" font-size="12.8" fill="#ececec" textLength="131" lengthAdjust="spacingAndGlyphs">Direct Display Control</text>
<path d="M1592.5 -2H1634V27Q1634 33.5 1627.5 33.5H1599Q1592.5 33.5 1592.5 27Z" fill="url(#btng)" stroke="#b4b4b4" stroke-width="1"/>
<path d="M1635 -2H1670V33.5H1641.5Q1635 33.5 1635 27Z" fill="url(#btng)" stroke="#b4b4b4" stroke-width="1"/>
<circle cx="1612.8" cy="16.2" r="12.6" fill="url(#btnc)"/>
<circle cx="1654" cy="16.2" r="12.6" fill="url(#btnc)"/>
<path d="M1619.23 14.74L1621.31 14.94L1621.31 17.46L1619.23 17.66L1618.44 19.57L1619.76 21.19L1617.99 22.96L1616.37 21.64L1614.46 22.43L1614.26 24.51L1611.74 24.51L1611.54 22.43L1609.63 21.64L1608.01 22.96L1606.24 21.19L1607.56 19.57L1606.77 17.66L1604.69 17.46L1604.69 14.94L1606.77 14.74L1607.56 12.83L1606.24 11.21L1608.01 9.44L1609.63 10.76L1611.54 9.97L1611.74 7.89L1614.26 7.89L1614.46 9.97L1616.37 10.76L1617.99 9.44L1619.76 11.21L1618.44 12.83ZM1616.9 16.2A3.9 3.9 0 1 0 1609.1 16.2A3.9 3.9 0 1 0 1616.9 16.2Z" fill="#dcdcdc" fill-rule="evenodd"/>
<path d="M1655.2 9.8V22.4L1648 16.1Z" fill="#f4f4f4"/>
<text x="6" y="123.5" font-size="40.6" fill="#f4f4f4" textLength="240.4" lengthAdjust="spacingAndGlyphs">ColorChecker</text>
<text x="49" y="677.6" font-size="29" fill="#f2f2f2" textLength="232.8" lengthAdjust="spacingAndGlyphs">Avg dE2000: 1,52</text>
<text x="44.9" y="718.5" font-size="29" fill="#f2f2f2" textLength="242.6" lengthAdjust="spacingAndGlyphs">Max dE2000: 3,47</text>
<text x="12.7" y="766.8" font-size="29.4" fill="#f2f2f2" textLength="220.3" lengthAdjust="spacingAndGlyphs">Current Reading</text>
<text x="13.5" y="801.8" font-size="26.3" fill="#f2f2f2" textLength="87.9" lengthAdjust="spacingAndGlyphs">x: 0,418</text>
<text x="169.9" y="801.8" font-size="26.3" fill="#f2f2f2" textLength="102.2" lengthAdjust="spacingAndGlyphs">y: 0,5102</text>
<text x="13.5" y="843" font-size="26.3" fill="#f2f2f2" textLength="110.3" lengthAdjust="spacingAndGlyphs">fL: 131,23</text>
<text x="13.5" y="876.7" font-size="26.3" fill="#f2f2f2" textLength="158.7" lengthAdjust="spacingAndGlyphs">cd/m²: 449,64</text>
<text x="186.6" y="263.9" font-size="14.4" fill="#d2d2d2" text-anchor="middle" textLength="78.8" lengthAdjust="spacingAndGlyphs">DeltaE 2000</text>
<rect x="18.6" y="269.4" width="335.9" height="331.6" fill="#242424"/>
<line x1="63.2" y1="269.4" x2="63.2" y2="601" stroke="#9a9a9a" stroke-width="1.3"/>
<line x1="107.8" y1="269.4" x2="107.8" y2="601" stroke="#9a9a9a" stroke-width="1.3"/>
<line x1="152.4" y1="269.4" x2="152.4" y2="601" stroke="#9a9a9a" stroke-width="1.3"/>
<line x1="197" y1="269.4" x2="197" y2="601" stroke="#9a9a9a" stroke-width="1.3"/>
<line x1="241.6" y1="269.4" x2="241.6" y2="601" stroke="#9a9a9a" stroke-width="1.3"/>
<line x1="286.2" y1="269.4" x2="286.2" y2="601" stroke="#9a9a9a" stroke-width="1.3"/>
<line x1="330.8" y1="269.4" x2="330.8" y2="601" stroke="#9a9a9a" stroke-width="1.3"/>
<rect x="19.2" y="271.5" width="30.99" height="7.2" fill="url(#b0)" stroke="#000" stroke-width="1.2"/>
<rect x="19.2" y="282.49" width="3.56" height="7.2" fill="url(#b1)" stroke="#000" stroke-width="1.2"/>
<rect x="19.2" y="293.48" width="39.02" height="7.2" fill="url(#b2)" stroke="#000" stroke-width="1.2"/>
<rect x="19.2" y="304.47" width="13.15" height="7.2" fill="url(#b3)" stroke="#000" stroke-width="1.2"/>
<rect x="19.2" y="315.46" width="32.1" height="7.2" fill="url(#b4)" stroke="#000" stroke-width="1.2"/>
<rect x="19.2" y="326.45" width="43.25" height="7.2" fill="url(#b5)" stroke="#000" stroke-width="1.2"/>
<rect x="19.2" y="337.44" width="19.84" height="7.2" fill="url(#b6)" stroke="#000" stroke-width="1.2"/>
<rect x="19.2" y="348.43" width="4.45" height="7.2" fill="url(#b7)" stroke="#000" stroke-width="1.2"/>
<rect x="19.2" y="359.42" width="18.72" height="7.2" fill="url(#b8)" stroke="#000" stroke-width="1.2"/>
<rect x="19.2" y="370.41" width="26.31" height="7.2" fill="url(#b9)" stroke="#000" stroke-width="1.2"/>
<rect x="19.2" y="381.4" width="32.1" height="7.2" fill="url(#b10)" stroke="#000" stroke-width="1.2"/>
<rect x="19.2" y="392.39" width="26.31" height="7.2" fill="url(#b11)" stroke="#000" stroke-width="1.2"/>
<rect x="19.2" y="403.38" width="36.12" height="7.2" fill="url(#b12)" stroke="#000" stroke-width="1.2"/>
<rect x="19.2" y="414.37" width="19.84" height="7.2" fill="url(#b13)" stroke="#000" stroke-width="1.2"/>
<rect x="19.2" y="425.36" width="22.96" height="7.2" fill="url(#b14)" stroke="#000" stroke-width="1.2"/>
<rect x="19.2" y="436.35" width="16.72" height="7.2" fill="url(#b15)" stroke="#000" stroke-width="1.2"/>
<rect x="19.2" y="447.34" width="21.4" height="7.2" fill="url(#b16)" stroke="#000" stroke-width="1.2"/>
<rect x="19.2" y="458.33" width="34.33" height="7.2" fill="url(#b17)" stroke="#000" stroke-width="1.2"/>
<rect x="19.2" y="469.32" width="13.82" height="7.2" fill="url(#b18)" stroke="#000" stroke-width="1.2"/>
<rect x="19.2" y="480.31" width="16.72" height="7.2" fill="url(#b19)" stroke="#000" stroke-width="1.2"/>
<rect x="19.2" y="491.3" width="30.32" height="7.2" fill="url(#b20)" stroke="#000" stroke-width="1.2"/>
<rect x="19.2" y="502.89" width="18.95" height="7.2" fill="url(#b21)" stroke="#000" stroke-width="1.2"/>
<rect x="19.2" y="513.88" width="69.34" height="7.2" fill="url(#b22)" stroke="#000" stroke-width="1.2"/>
<rect x="19.2" y="524.87" width="25.19" height="7.2" fill="url(#b23)" stroke="#000" stroke-width="1.2"/>
<rect x="19.2" y="535.86" width="5.57" height="7.2" fill="url(#b24)" stroke="#000" stroke-width="1.2"/>
<rect x="19.2" y="546.85" width="66.45" height="7.2" fill="url(#b25)" stroke="#000" stroke-width="1.2"/>
<rect x="19.2" y="557.84" width="56.41" height="7.2" fill="url(#b26)" stroke="#000" stroke-width="1.2"/>
<rect x="19.2" y="568.83" width="65.55" height="7.2" fill="url(#b27)" stroke="#000" stroke-width="1.2"/>
<rect x="19.2" y="579.22" width="72.47" height="7.2" fill="url(#b28)" stroke="#000" stroke-width="1.2"/>
<rect x="19.2" y="590.21" width="76.48" height="7.2" fill="url(#b29)" stroke="#000" stroke-width="1.2"/>
<rect x="18.6" y="269.4" width="335.9" height="331.6" fill="none" stroke="#9a9a9a" stroke-width="1.4"/>
<line x1="18.6" y1="601" x2="18.6" y2="606.6" stroke="#b4b4b4" stroke-width="1.4"/>
<text x="18.6" y="622.8" font-size="14.2" fill="#d2d2d2" text-anchor="middle">0</text>
<line x1="63.2" y1="601" x2="63.2" y2="606.6" stroke="#b4b4b4" stroke-width="1.4"/>
<text x="63.2" y="622.8" font-size="14.2" fill="#d2d2d2" text-anchor="middle">2</text>
<line x1="107.8" y1="601" x2="107.8" y2="606.6" stroke="#b4b4b4" stroke-width="1.4"/>
<text x="107.8" y="622.8" font-size="14.2" fill="#d2d2d2" text-anchor="middle">4</text>
<line x1="152.4" y1="601" x2="152.4" y2="606.6" stroke="#b4b4b4" stroke-width="1.4"/>
<text x="152.4" y="622.8" font-size="14.2" fill="#d2d2d2" text-anchor="middle">6</text>
<line x1="197" y1="601" x2="197" y2="606.6" stroke="#b4b4b4" stroke-width="1.4"/>
<text x="197" y="622.8" font-size="14.2" fill="#d2d2d2" text-anchor="middle">8</text>
<line x1="241.6" y1="601" x2="241.6" y2="606.6" stroke="#b4b4b4" stroke-width="1.4"/>
<text x="241.6" y="622.8" font-size="14.2" fill="#d2d2d2" text-anchor="middle">10</text>
<line x1="286.2" y1="601" x2="286.2" y2="606.6" stroke="#b4b4b4" stroke-width="1.4"/>
<text x="286.2" y="622.8" font-size="14.2" fill="#d2d2d2" text-anchor="middle">12</text>
<line x1="330.8" y1="601" x2="330.8" y2="606.6" stroke="#b4b4b4" stroke-width="1.4"/>
<text x="330.8" y="622.8" font-size="14.2" fill="#d2d2d2" text-anchor="middle">14</text>
<text x="465.9" y="114.8" font-size="14.4" fill="#d2d2d2" text-anchor="middle" textLength="44.8" lengthAdjust="spacingAndGlyphs">Delta L</text>
<rect x="398.6" y="119.8" width="153" height="336" fill="#242424"/>
<line x1="398.6" y1="161.8" x2="551.6" y2="161.8" stroke="#9a9a9a" stroke-width="1.3"/>
<line x1="398.6" y1="203.8" x2="551.6" y2="203.8" stroke="#9a9a9a" stroke-width="1.3"/>
<line x1="398.6" y1="245.8" x2="551.6" y2="245.8" stroke="#9a9a9a" stroke-width="1.3"/>
<line x1="398.6" y1="287.8" x2="551.6" y2="287.8" stroke="#9a9a9a" stroke-width="1.3"/>
<line x1="398.6" y1="329.8" x2="551.6" y2="329.8" stroke="#9a9a9a" stroke-width="1.3"/>
<line x1="398.6" y1="371.8" x2="551.6" y2="371.8" stroke="#9a9a9a" stroke-width="1.3"/>
<line x1="398.6" y1="413.8" x2="551.6" y2="413.8" stroke="#9a9a9a" stroke-width="1.3"/>
<rect x="413.7" y="213.04" width="120.8" height="75.16" fill="url(#ybar)" stroke="#000" stroke-width="1.3"/>
<rect x="398.6" y="119.8" width="153" height="336" fill="none" stroke="#9a9a9a" stroke-width="1.4"/>
<line x1="392.6" y1="119.8" x2="398.6" y2="119.8" stroke="#c8c8c8" stroke-width="1.6"/>
<text x="392" y="124.9" font-size="14.2" fill="#d2d2d2" text-anchor="end">4</text>
<line x1="392.6" y1="161.8" x2="398.6" y2="161.8" stroke="#c8c8c8" stroke-width="1.6"/>
<text x="392" y="166.9" font-size="14.2" fill="#d2d2d2" text-anchor="end">3</text>
<line x1="392.6" y1="203.8" x2="398.6" y2="203.8" stroke="#c8c8c8" stroke-width="1.6"/>
<text x="392" y="208.9" font-size="14.2" fill="#d2d2d2" text-anchor="end">2</text>
<line x1="392.6" y1="245.8" x2="398.6" y2="245.8" stroke="#c8c8c8" stroke-width="1.6"/>
<text x="392" y="250.9" font-size="14.2" fill="#d2d2d2" text-anchor="end">1</text>
<line x1="392.6" y1="287.8" x2="398.6" y2="287.8" stroke="#c8c8c8" stroke-width="1.6"/>
<text x="392" y="292.9" font-size="14.2" fill="#d2d2d2" text-anchor="end">0</text>
<line x1="392.6" y1="329.8" x2="398.6" y2="329.8" stroke="#c8c8c8" stroke-width="1.6"/>
<text x="392" y="334.9" font-size="14.2" fill="#d2d2d2" text-anchor="end">-1</text>
<line x1="392.6" y1="371.8" x2="398.6" y2="371.8" stroke="#c8c8c8" stroke-width="1.6"/>
<text x="392" y="376.9" font-size="14.2" fill="#d2d2d2" text-anchor="end">-2</text>
<line x1="392.6" y1="413.8" x2="398.6" y2="413.8" stroke="#c8c8c8" stroke-width="1.6"/>
<text x="392" y="418.9" font-size="14.2" fill="#d2d2d2" text-anchor="end">-3</text>
<line x1="392.6" y1="455.8" x2="398.6" y2="455.8" stroke="#c8c8c8" stroke-width="1.6"/>
<text x="392" y="460.9" font-size="14.2" fill="#d2d2d2" text-anchor="end">-4</text>
<text x="662.9" y="114.8" font-size="14.4" fill="#d2d2d2" text-anchor="middle" textLength="47" lengthAdjust="spacingAndGlyphs">Delta C</text>
<rect x="595.7" y="119.8" width="152.8" height="336" fill="#242424"/>
<line x1="595.7" y1="161.8" x2="748.5" y2="161.8" stroke="#9a9a9a" stroke-width="1.3"/>
<line x1="595.7" y1="203.8" x2="748.5" y2="203.8" stroke="#9a9a9a" stroke-width="1.3"/>
<line x1="595.7" y1="245.8" x2="748.5" y2="245.8" stroke="#9a9a9a" stroke-width="1.3"/>
<line x1="595.7" y1="287.8" x2="748.5" y2="287.8" stroke="#9a9a9a" stroke-width="1.3"/>
<line x1="595.7" y1="329.8" x2="748.5" y2="329.8" stroke="#9a9a9a" stroke-width="1.3"/>
<line x1="595.7" y1="371.8" x2="748.5" y2="371.8" stroke="#9a9a9a" stroke-width="1.3"/>
<line x1="595.7" y1="413.8" x2="748.5" y2="413.8" stroke="#9a9a9a" stroke-width="1.3"/>
<rect x="610.7" y="123.58" width="121.3" height="164.62" fill="url(#ybar)" stroke="#000" stroke-width="1.3"/>
<rect x="595.7" y="119.8" width="152.8" height="336" fill="none" stroke="#9a9a9a" stroke-width="1.4"/>
<line x1="589.7" y1="119.8" x2="595.7" y2="119.8" stroke="#c8c8c8" stroke-width="1.6"/>
<text x="589.1" y="124.9" font-size="14.2" fill="#d2d2d2" text-anchor="end">4</text>
<line x1="589.7" y1="161.8" x2="595.7" y2="161.8" stroke="#c8c8c8" stroke-width="1.6"/>
<text x="589.1" y="166.9" font-size="14.2" fill="#d2d2d2" text-anchor="end">3</text>
<line x1="589.7" y1="203.8" x2="595.7" y2="203.8" stroke="#c8c8c8" stroke-width="1.6"/>
<text x="589.1" y="208.9" font-size="14.2" fill="#d2d2d2" text-anchor="end">2</text>
<line x1="589.7" y1="245.8" x2="595.7" y2="245.8" stroke="#c8c8c8" stroke-width="1.6"/>
<text x="589.1" y="250.9" font-size="14.2" fill="#d2d2d2" text-anchor="end">1</text>
<line x1="589.7" y1="287.8" x2="595.7" y2="287.8" stroke="#c8c8c8" stroke-width="1.6"/>
<text x="589.1" y="292.9" font-size="14.2" fill="#d2d2d2" text-anchor="end">0</text>
<line x1="589.7" y1="329.8" x2="595.7" y2="329.8" stroke="#c8c8c8" stroke-width="1.6"/>
<text x="589.1" y="334.9" font-size="14.2" fill="#d2d2d2" text-anchor="end">-1</text>
<line x1="589.7" y1="371.8" x2="595.7" y2="371.8" stroke="#c8c8c8" stroke-width="1.6"/>
<text x="589.1" y="376.9" font-size="14.2" fill="#d2d2d2" text-anchor="end">-2</text>
<line x1="589.7" y1="413.8" x2="595.7" y2="413.8" stroke="#c8c8c8" stroke-width="1.6"/>
<text x="589.1" y="418.9" font-size="14.2" fill="#d2d2d2" text-anchor="end">-3</text>
<line x1="589.7" y1="455.8" x2="595.7" y2="455.8" stroke="#c8c8c8" stroke-width="1.6"/>
<text x="589.1" y="460.9" font-size="14.2" fill="#d2d2d2" text-anchor="end">-4</text>
<text x="860.3" y="114.8" font-size="14.4" fill="#d2d2d2" text-anchor="middle" textLength="47.8" lengthAdjust="spacingAndGlyphs">Delta H</text>
<rect x="793.5" y="119.8" width="153" height="336" fill="#242424"/>
<line x1="793.5" y1="161.8" x2="946.5" y2="161.8" stroke="#9a9a9a" stroke-width="1.3"/>
<line x1="793.5" y1="203.8" x2="946.5" y2="203.8" stroke="#9a9a9a" stroke-width="1.3"/>
<line x1="793.5" y1="245.8" x2="946.5" y2="245.8" stroke="#9a9a9a" stroke-width="1.3"/>
<line x1="793.5" y1="287.8" x2="946.5" y2="287.8" stroke="#9a9a9a" stroke-width="1.3"/>
<line x1="793.5" y1="329.8" x2="946.5" y2="329.8" stroke="#9a9a9a" stroke-width="1.3"/>
<line x1="793.5" y1="371.8" x2="946.5" y2="371.8" stroke="#9a9a9a" stroke-width="1.3"/>
<line x1="793.5" y1="413.8" x2="946.5" y2="413.8" stroke="#9a9a9a" stroke-width="1.3"/>
<rect x="807.7" y="224.38" width="122" height="63.82" fill="url(#ybar)" stroke="#000" stroke-width="1.3"/>
<rect x="793.5" y="119.8" width="153" height="336" fill="none" stroke="#9a9a9a" stroke-width="1.4"/>
<line x1="787.5" y1="119.8" x2="793.5" y2="119.8" stroke="#c8c8c8" stroke-width="1.6"/>
<text x="786.9" y="124.9" font-size="14.2" fill="#d2d2d2" text-anchor="end">4</text>
<line x1="787.5" y1="161.8" x2="793.5" y2="161.8" stroke="#c8c8c8" stroke-width="1.6"/>
<text x="786.9" y="166.9" font-size="14.2" fill="#d2d2d2" text-anchor="end">3</text>
<line x1="787.5" y1="203.8" x2="793.5" y2="203.8" stroke="#c8c8c8" stroke-width="1.6"/>
<text x="786.9" y="208.9" font-size="14.2" fill="#d2d2d2" text-anchor="end">2</text>
<line x1="787.5" y1="245.8" x2="793.5" y2="245.8" stroke="#c8c8c8" stroke-width="1.6"/>
<text x="786.9" y="250.9" font-size="14.2" fill="#d2d2d2" text-anchor="end">1</text>
<line x1="787.5" y1="287.8" x2="793.5" y2="287.8" stroke="#c8c8c8" stroke-width="1.6"/>
<text x="786.9" y="292.9" font-size="14.2" fill="#d2d2d2" text-anchor="end">0</text>
<line x1="787.5" y1="329.8" x2="793.5" y2="329.8" stroke="#c8c8c8" stroke-width="1.6"/>
<text x="786.9" y="334.9" font-size="14.2" fill="#d2d2d2" text-anchor="end">-1</text>
<line x1="787.5" y1="371.8" x2="793.5" y2="371.8" stroke="#c8c8c8" stroke-width="1.6"/>
<text x="786.9" y="376.9" font-size="14.2" fill="#d2d2d2" text-anchor="end">-2</text>
<line x1="787.5" y1="413.8" x2="793.5" y2="413.8" stroke="#c8c8c8" stroke-width="1.6"/>
<text x="786.9" y="418.9" font-size="14.2" fill="#d2d2d2" text-anchor="end">-3</text>
<line x1="787.5" y1="455.8" x2="793.5" y2="455.8" stroke="#c8c8c8" stroke-width="1.6"/>
<text x="786.9" y="460.9" font-size="14.2" fill="#d2d2d2" text-anchor="end">-4</text>
<rect x="374.3" y="469.3" width="591.5" height="160" fill="#000"/>
<clipPath id="swc"><rect x="374.3" y="469.3" width="591.5" height="160"/></clipPath>
<g clip-path="url(#swc)">
<rect x="391" y="476" width="58.2" height="60" fill="#fffffd"/>
<rect x="391" y="534.6" width="58.2" height="58.3" fill="#ffffff" shape-rendering="crispEdges"/>
<rect x="391.5" y="476.5" width="57.2" height="115.9" fill="none" stroke="#ffffff" stroke-width="1.1" stroke-opacity="0.92"/>
<rect x="392.6" y="477.6" width="55" height="113.7" fill="none" stroke="#000000" stroke-width="1" stroke-opacity="0.17"/>
<text x="420.2" y="608.2" font-size="12.6" fill="#fff" text-anchor="middle" textLength="33" lengthAdjust="spacingAndGlyphs">White</text>
<rect x="459" y="476" width="58.2" height="60" fill="#e4e8e2"/>
<rect x="459" y="534.6" width="58.2" height="58.3" fill="#e6e6e6" shape-rendering="crispEdges"/>
<rect x="459.5" y="476.5" width="57.2" height="115.9" fill="none" stroke="#ffffff" stroke-width="1.1" stroke-opacity="0.92"/>
<rect x="460.6" y="477.6" width="55" height="113.7" fill="none" stroke="#000000" stroke-width="1" stroke-opacity="0.17"/>
<text x="488.2" y="608.2" font-size="12.6" fill="#fff" text-anchor="middle" textLength="43" lengthAdjust="spacingAndGlyphs">Gray 80</text>
<rect x="527" y="476" width="58.2" height="60" fill="#d0d3ce"/>
<rect x="527" y="534.6" width="58.2" height="58.3" fill="#d1d1d1" shape-rendering="crispEdges"/>
<rect x="527.5" y="476.5" width="57.2" height="115.9" fill="none" stroke="#ffffff" stroke-width="1.1" stroke-opacity="0.92"/>
<rect x="528.6" y="477.6" width="55" height="113.7" fill="none" stroke="#000000" stroke-width="1" stroke-opacity="0.17"/>
<text x="556.2" y="608.2" font-size="12.6" fill="#fff" text-anchor="middle" textLength="43" lengthAdjust="spacingAndGlyphs">Gray 65</text>
<rect x="595" y="476" width="58.2" height="60" fill="#b6bbb6"/>
<rect x="595" y="534.6" width="58.2" height="58.3" fill="#bababa" shape-rendering="crispEdges"/>
<rect x="595.5" y="476.5" width="57.2" height="115.9" fill="none" stroke="#ffffff" stroke-width="1.1" stroke-opacity="0.92"/>
<rect x="596.6" y="477.6" width="55" height="113.7" fill="none" stroke="#000000" stroke-width="1" stroke-opacity="0.17"/>
<text x="624.2" y="608.2" font-size="12.6" fill="#fff" text-anchor="middle" textLength="43" lengthAdjust="spacingAndGlyphs">Gray 50</text>
<rect x="663" y="476" width="58.2" height="60" fill="#9a9f9d"/>
<rect x="663" y="534.6" width="58.2" height="58.3" fill="#9e9e9e" shape-rendering="crispEdges"/>
<rect x="663.5" y="476.5" width="57.2" height="115.9" fill="none" stroke="#ffffff" stroke-width="1.1" stroke-opacity="0.92"/>
<rect x="664.6" y="477.6" width="55" height="113.7" fill="none" stroke="#000000" stroke-width="1" stroke-opacity="0.17"/>
<text x="692.2" y="608.2" font-size="12.6" fill="#fff" text-anchor="middle" textLength="43" lengthAdjust="spacingAndGlyphs">Gray 35</text>
<rect x="731" y="476" width="58.2" height="60" fill="#000000"/>
<rect x="731" y="534.6" width="58.2" height="58.3" fill="#000000" shape-rendering="crispEdges"/>
<rect x="731.5" y="476.5" width="57.2" height="115.9" fill="none" stroke="#ffffff" stroke-width="1.1" stroke-opacity="0.92"/>
<rect x="732.6" y="477.6" width="55" height="113.7" fill="none" stroke="#000000" stroke-width="1" stroke-opacity="0.17"/>
<text x="760.2" y="608.2" font-size="12.6" fill="#fff" text-anchor="middle" textLength="30" lengthAdjust="spacingAndGlyphs">Black</text>
<rect x="799" y="476" width="58.2" height="60" fill="#73503e"/>
<rect x="799" y="534.6" width="58.2" height="58.3" fill="#735244" shape-rendering="crispEdges"/>
<rect x="799.5" y="476.5" width="57.2" height="115.9" fill="none" stroke="#ffffff" stroke-width="1.1" stroke-opacity="0.92"/>
<rect x="800.6" y="477.6" width="55" height="113.7" fill="none" stroke="#000000" stroke-width="1" stroke-opacity="0.17"/>
<text x="828.2" y="608.2" font-size="12.6" fill="#fff" text-anchor="middle" textLength="52" lengthAdjust="spacingAndGlyphs">Dark Skin</text>
<rect x="867" y="476" width="58.2" height="60" fill="#c69a80"/>
<rect x="867" y="534.6" width="58.2" height="58.3" fill="#c29682" shape-rendering="crispEdges"/>
<rect x="867.5" y="476.5" width="57.2" height="115.9" fill="none" stroke="#ffffff" stroke-width="1.1" stroke-opacity="0.92"/>
<rect x="868.6" y="477.6" width="55" height="113.7" fill="none" stroke="#000000" stroke-width="1" stroke-opacity="0.17"/>
<text x="896.2" y="608.2" font-size="12.6" fill="#fff" text-anchor="middle" textLength="53.5" lengthAdjust="spacingAndGlyphs">Light Skin</text>
<rect x="935" y="476" width="58.2" height="60" fill="#5c7aa0"/>
<rect x="935" y="534.6" width="58.2" height="58.3" fill="#627a9d" shape-rendering="crispEdges"/>
<rect x="935.5" y="476.5" width="57.2" height="115.9" fill="none" stroke="#ffffff" stroke-width="1.1" stroke-opacity="0.92"/>
<rect x="936.6" y="477.6" width="55" height="113.7" fill="none" stroke="#000000" stroke-width="1" stroke-opacity="0.17"/>
<text x="966.8" y="608.2" font-size="12.6" fill="#fff" text-anchor="middle" textLength="50" lengthAdjust="spacingAndGlyphs">Blue Sky</text>
</g>
<text x="0" y="0" font-size="12.4" fill="#fff" text-anchor="middle" textLength="34.5" lengthAdjust="spacingAndGlyphs" transform="translate(387.2 501.8) rotate(-90)">Actual</text>
<text x="0" y="0" font-size="12.4" fill="#fff" text-anchor="middle" textLength="34.8" lengthAdjust="spacingAndGlyphs" transform="translate(387.2 567.5) rotate(-90)">Target</text>
<rect x="374.3" y="629.2" width="591.5" height="17" fill="#666666"/>
<rect x="391.6" y="630.7" width="157.7" height="14" fill="#3e3e3e" rx="7"/>
<rect x="375.1" y="630.5" width="14.6" height="14.4" fill="#858585" rx="2.5" stroke="#a2a2a2" stroke-width="1"/>
<path d="M385.3 633.1V642.3L378.9 637.7Z" fill="#3c3c3c"/>
<rect x="950.4" y="630.5" width="14.6" height="14.4" fill="#858585" rx="2.5" stroke="#a2a2a2" stroke-width="1"/>
<path d="M954.8 633.1V642.3L961.2 637.7Z" fill="#3c3c3c"/>
<text x="1319.6" y="113" font-size="14.4" fill="#d2d2d2" text-anchor="middle" textLength="84.3" lengthAdjust="spacingAndGlyphs">CIE 1976 u'v'</text>
<rect x="1016.7" y="118.7" width="639.6" height="491.9" fill="none" stroke="#9a9a9a" stroke-width="1.4"/>
<line x1="1016.7" y1="610.6" x2="1016.7" y2="616.2" stroke="#c0c0c0" stroke-width="1.5"/>
<text x="1016.7" y="631.9" font-size="14.2" fill="#d2d2d2" text-anchor="middle">0</text>
<line x1="1011.1" y1="610.6" x2="1016.7" y2="610.6" stroke="#c0c0c0" stroke-width="1.5"/>
<text x="1010.1" y="618" font-size="14.2" fill="#d2d2d2" text-anchor="end">0</text>
<line x1="1069.99" y1="610.6" x2="1069.99" y2="616.2" stroke="#c0c0c0" stroke-width="1.5"/>
<text x="1069.99" y="631.9" font-size="14.2" fill="#d2d2d2" text-anchor="middle">0,05</text>
<line x1="1011.1" y1="569.61" x2="1016.7" y2="569.61" stroke="#c0c0c0" stroke-width="1.5"/>
<text x="1010.1" y="576.83" font-size="14.2" fill="#d2d2d2" text-anchor="end">0,05</text>
<line x1="1123.28" y1="610.6" x2="1123.28" y2="616.2" stroke="#c0c0c0" stroke-width="1.5"/>
<text x="1123.28" y="631.9" font-size="14.2" fill="#d2d2d2" text-anchor="middle">0,1</text>
<line x1="1011.1" y1="528.62" x2="1016.7" y2="528.62" stroke="#c0c0c0" stroke-width="1.5"/>
<text x="1010.1" y="535.66" font-size="14.2" fill="#d2d2d2" text-anchor="end">0,1</text>
<line x1="1176.57" y1="610.6" x2="1176.57" y2="616.2" stroke="#c0c0c0" stroke-width="1.5"/>
<text x="1176.57" y="631.9" font-size="14.2" fill="#d2d2d2" text-anchor="middle">0,15</text>
<line x1="1011.1" y1="487.63" x2="1016.7" y2="487.63" stroke="#c0c0c0" stroke-width="1.5"/>
<text x="1010.1" y="494.48" font-size="14.2" fill="#d2d2d2" text-anchor="end">0,15</text>
<line x1="1229.86" y1="610.6" x2="1229.86" y2="616.2" stroke="#c0c0c0" stroke-width="1.5"/>
<text x="1229.86" y="631.9" font-size="14.2" fill="#d2d2d2" text-anchor="middle">0,2</text>
<line x1="1011.1" y1="446.64" x2="1016.7" y2="446.64" stroke="#c0c0c0" stroke-width="1.5"/>
<text x="1010.1" y="453.31" font-size="14.2" fill="#d2d2d2" text-anchor="end">0,2</text>
<line x1="1283.15" y1="610.6" x2="1283.15" y2="616.2" stroke="#c0c0c0" stroke-width="1.5"/>
<text x="1283.15" y="631.9" font-size="14.2" fill="#d2d2d2" text-anchor="middle">0,25</text>
<line x1="1011.1" y1="405.65" x2="1016.7" y2="405.65" stroke="#c0c0c0" stroke-width="1.5"/>
<text x="1010.1" y="412.14" font-size="14.2" fill="#d2d2d2" text-anchor="end">0,25</text>
<line x1="1336.44" y1="610.6" x2="1336.44" y2="616.2" stroke="#c0c0c0" stroke-width="1.5"/>
<text x="1336.44" y="631.9" font-size="14.2" fill="#d2d2d2" text-anchor="middle">0,3</text>
<line x1="1011.1" y1="364.66" x2="1016.7" y2="364.66" stroke="#c0c0c0" stroke-width="1.5"/>
<text x="1010.1" y="370.97" font-size="14.2" fill="#d2d2d2" text-anchor="end">0,3</text>
<line x1="1389.73" y1="610.6" x2="1389.73" y2="616.2" stroke="#c0c0c0" stroke-width="1.5"/>
<text x="1389.73" y="631.9" font-size="14.2" fill="#d2d2d2" text-anchor="middle">0,35</text>
<line x1="1011.1" y1="323.67" x2="1016.7" y2="323.67" stroke="#c0c0c0" stroke-width="1.5"/>
<text x="1010.1" y="329.8" font-size="14.2" fill="#d2d2d2" text-anchor="end">0,35</text>
<line x1="1443.02" y1="610.6" x2="1443.02" y2="616.2" stroke="#c0c0c0" stroke-width="1.5"/>
<text x="1443.02" y="631.9" font-size="14.2" fill="#d2d2d2" text-anchor="middle">0,4</text>
<line x1="1011.1" y1="282.68" x2="1016.7" y2="282.68" stroke="#c0c0c0" stroke-width="1.5"/>
<text x="1010.1" y="288.63" font-size="14.2" fill="#d2d2d2" text-anchor="end">0,4</text>
<line x1="1496.31" y1="610.6" x2="1496.31" y2="616.2" stroke="#c0c0c0" stroke-width="1.5"/>
<text x="1496.31" y="631.9" font-size="14.2" fill="#d2d2d2" text-anchor="middle">0,45</text>
<line x1="1011.1" y1="241.69" x2="1016.7" y2="241.69" stroke="#c0c0c0" stroke-width="1.5"/>
<text x="1010.1" y="247.45" font-size="14.2" fill="#d2d2d2" text-anchor="end">0,45</text>
<line x1="1549.6" y1="610.6" x2="1549.6" y2="616.2" stroke="#c0c0c0" stroke-width="1.5"/>
<text x="1549.6" y="631.9" font-size="14.2" fill="#d2d2d2" text-anchor="middle">0,5</text>
<line x1="1011.1" y1="200.7" x2="1016.7" y2="200.7" stroke="#c0c0c0" stroke-width="1.5"/>
<text x="1010.1" y="206.28" font-size="14.2" fill="#d2d2d2" text-anchor="end">0,5</text>
<line x1="1602.89" y1="610.6" x2="1602.89" y2="616.2" stroke="#c0c0c0" stroke-width="1.5"/>
<text x="1602.89" y="631.9" font-size="14.2" fill="#d2d2d2" text-anchor="middle">0,55</text>
<line x1="1011.1" y1="159.71" x2="1016.7" y2="159.71" stroke="#c0c0c0" stroke-width="1.5"/>
<text x="1010.1" y="165.11" font-size="14.2" fill="#d2d2d2" text-anchor="end">0,55</text>
<rect x="1219.6" y="218.8" width="13.4" height="13.4" fill="#ffffff" stroke="#000" stroke-width="2.1" fill-opacity="0.5"/>
<circle cx="1226.6" cy="224" r="4.1" fill="#ffffff" stroke="#000" stroke-width="1.25"/>
<circle cx="1226" cy="223.6" r="4.1" fill="#e6e6e6" stroke="#000" stroke-width="1.25"/>
<circle cx="1225.6" cy="223.6" r="4.1" fill="#d1d1d1" stroke="#000" stroke-width="1.25"/>
<circle cx="1225.2" cy="223.8" r="4.1" fill="#bababa" stroke="#000" stroke-width="1.25"/>
<circle cx="1224.3" cy="224.3" r="4.1" fill="#9e9e9e" stroke="#000" stroke-width="1.25"/>
<circle cx="1244.5" cy="247.4" r="4.1" fill="#000000" stroke="#000" stroke-width="1.25"/>
<rect x="1268.9" y="193.6" width="13.4" height="13.4" fill="none" stroke="#ffffff" stroke-width="1.5" stroke-opacity="0.88"/>
<circle cx="1276.9" cy="198.5" r="4.1" fill="#735244" stroke="#000" stroke-width="1.25"/>
<rect x="1257.6" y="199.7" width="13.4" height="13.4" fill="none" stroke="#ffffff" stroke-width="1.5" stroke-opacity="0.88"/>
<circle cx="1260.9" cy="203.9" r="4.1" fill="#c29682" stroke="#000" stroke-width="1.25"/>
<rect x="1196.6" y="258.7" width="13.4" height="13.4" fill="none" stroke="#ffffff" stroke-width="1.5" stroke-opacity="0.88"/>
<circle cx="1201.9" cy="265.2" r="4.1" fill="#627a9d" stroke="#000" stroke-width="1.25"/>
<rect x="1203.6" y="179.5" width="13.4" height="13.4" fill="none" stroke="#ffffff" stroke-width="1.5" stroke-opacity="0.88"/>
<circle cx="1207.6" cy="182.4" r="4.1" fill="#576c43" stroke="#000" stroke-width="1.25"/>
<rect x="1217.1" y="263.7" width="13.4" height="13.4" fill="none" stroke="#ffffff" stroke-width="1.5" stroke-opacity="0.88"/>
<circle cx="1222.5" cy="269.4" r="4.1" fill="#8580b1" stroke="#000" stroke-width="1.25"/>
<rect x="1173.7" y="210.7" width="13.4" height="13.4" fill="none" stroke="#ffffff" stroke-width="1.5" stroke-opacity="0.88"/>
<circle cx="1179" cy="217.9" r="4.1" fill="#67bdaa" stroke="#000" stroke-width="1.25"/>
<rect x="1328.7" y="164.6" width="13.4" height="13.4" fill="none" stroke="#ffffff" stroke-width="1.5" stroke-opacity="0.88"/>
<circle cx="1333.9" cy="169.8" r="4.1" fill="#d67e2c" stroke="#000" stroke-width="1.25"/>
<rect x="1199.7" y="311.5" width="13.4" height="13.4" fill="none" stroke="#ffffff" stroke-width="1.5" stroke-opacity="0.88"/>
<circle cx="1203.5" cy="322.4" r="4.1" fill="#505ba6" stroke="#000" stroke-width="1.25"/>
<rect x="1347.8" y="206.7" width="13.4" height="13.4" fill="none" stroke="#ffffff" stroke-width="1.5" stroke-opacity="0.88"/>
<circle cx="1355.9" cy="212.5" r="4.1" fill="#c15a63" stroke="#000" stroke-width="1.25"/>
<rect x="1252.7" y="281.7" width="13.4" height="13.4" fill="none" stroke="#ffffff" stroke-width="1.5" stroke-opacity="0.88"/>
<circle cx="1259.4" cy="291.1" r="4.1" fill="#5e3c6c" stroke="#000" stroke-width="1.25"/>
<rect x="1206.7" y="157.6" width="13.4" height="13.4" fill="none" stroke="#ffffff" stroke-width="1.5" stroke-opacity="0.88"/>
<circle cx="1210.5" cy="161.9" r="4.1" fill="#9dbc40" stroke="#000" stroke-width="1.25"/>
<rect x="1285.7" y="160.6" width="13.4" height="13.4" fill="none" stroke="#ffffff" stroke-width="1.5" stroke-opacity="0.88"/>
<circle cx="1289.3" cy="164.4" r="4.1" fill="#e0a32e" stroke="#000" stroke-width="1.25"/>
<rect x="1199.7" y="361.7" width="13.4" height="13.4" fill="none" stroke="#ffffff" stroke-width="1.5" stroke-opacity="0.88"/>
<circle cx="1205" cy="378.4" r="4.1" fill="#383d96" stroke="#000" stroke-width="1.25"/>
<rect x="1166.7" y="165.7" width="13.4" height="13.4" fill="none" stroke="#ffffff" stroke-width="1.5" stroke-opacity="0.88"/>
<circle cx="1169.5" cy="168.8" r="4.1" fill="#469449" stroke="#000" stroke-width="1.25"/>
<rect x="1408.9" y="194.8" width="13.4" height="13.4" fill="none" stroke="#ffffff" stroke-width="1.5" stroke-opacity="0.88"/>
<circle cx="1422.8" cy="198.5" r="4.1" fill="#af363c" stroke="#000" stroke-width="1.25"/>
<rect x="1253.6" y="153.6" width="13.4" height="13.4" fill="none" stroke="#ffffff" stroke-width="1.5" stroke-opacity="0.88"/>
<circle cx="1260.7" cy="159" r="4.1" fill="#e7c71f" stroke="#000" stroke-width="1.25"/>
<rect x="1315.2" y="252.8" width="13.4" height="13.4" fill="none" stroke="#ffffff" stroke-width="1.5" stroke-opacity="0.88"/>
<circle cx="1321.9" cy="261.3" r="4.1" fill="#bb5695" stroke="#000" stroke-width="1.25"/>
<rect x="1162.8" y="261.6" width="13.4" height="13.4" fill="none" stroke="#ffffff" stroke-width="1.5" stroke-opacity="0.88"/>
<circle cx="1166.9" cy="266.8" r="4.1" fill="#0885a1" stroke="#000" stroke-width="1.25"/>
<rect x="1489.7" y="174.3" width="13.4" height="13.4" fill="none" stroke="#ffffff" stroke-width="1.5" stroke-opacity="0.88"/>
<circle cx="1499" cy="179.6" r="4.1" fill="#ff0000" stroke="#000" stroke-width="1.25"/>
<rect x="1142.8" y="141.6" width="13.4" height="13.4" fill="none" stroke="#ffffff" stroke-width="1.5" stroke-opacity="0.88"/>
<circle cx="1148" cy="147" r="4.1" fill="#00ff00" stroke="#000" stroke-width="1.25"/>
<rect x="1196.8" y="473.9" width="13.4" height="13.4" fill="none" stroke="#ffffff" stroke-width="1.5" stroke-opacity="0.88"/>
<circle cx="1201" cy="484.8" r="4.1" fill="#0000ff" stroke="#000" stroke-width="1.25"/>
<rect x="1157.7" y="229.6" width="13.4" height="13.4" fill="none" stroke="#ffffff" stroke-width="1.5" stroke-opacity="0.88"/>
<circle cx="1163" cy="234.1" r="4.1" fill="#00ffff" stroke="#000" stroke-width="1.25"/>
<rect x="1334.8" y="331.6" width="13.4" height="13.4" fill="none" stroke="#ffffff" stroke-width="1.5" stroke-opacity="0.88"/>
<circle cx="1342.3" cy="337.7" r="4.1" fill="#ff00ff" stroke="#000" stroke-width="1.25"/>
<rect x="1226.6" y="149.5" width="13.4" height="13.4" fill="none" stroke="#ffffff" stroke-width="1.5" stroke-opacity="0.88"/>
<circle cx="1230.8" cy="154.9" r="4.1" fill="#ffff00" stroke="#000" stroke-width="1.25"/>
<rect x="1452.1" y="438.1" width="197.8" height="130.2" fill="none" stroke="#9a9a8a" stroke-width="1.6" stroke-opacity="0.9"/>
<rect x="1543.7" y="495.7" width="13.4" height="13.4" fill="none" stroke="#ffffff" stroke-width="1.5" stroke-opacity="0.9"/>
<ellipse cx="1545" cy="490.5" rx="4.4" ry="4" fill="#ffff00" stroke="#000" stroke-width="1.2"/>
<rect x="1401.5" y="578.6" width="252.2" height="26.5" fill="#333333"/>
<text x="1402.3" y="599.7" font-size="20.2" fill="#f2f2f2" textLength="211" lengthAdjust="spacingAndGlyphs">RGB Triplet: 255, 255, 0</text>
<rect x="319" y="659.8" width="1347" height="228.8" fill="#0c0c0c"/>
<clipPath id="tbc"><rect x="321" y="660.8" width="1343" height="226.2"/></clipPath>
<g clip-path="url(#tbc)">
<rect x="320" y="661.5" width="1345" height="13" fill="#2c2c2c"/>
<rect x="320" y="673.8" width="1345" height="11.9" fill="#161616"/>
<rect x="320" y="685.8" width="1345" height="24.1" fill="#424242"/>
<rect x="320" y="709.7" width="1345" height="23.5" fill="#7d7d7d"/>
<rect x="320" y="733" width="1345" height="23.4" fill="#424242"/>
<rect x="320" y="756.2" width="1345" height="23.4" fill="#7d7d7d"/>
<rect x="320" y="779.4" width="1345" height="23.5" fill="#424242"/>
<rect x="320" y="802.7" width="1345" height="23.5" fill="#7d7d7d"/>
<rect x="320" y="826" width="1345" height="23.2" fill="#424242"/>
<rect x="320" y="849" width="1345" height="23.6" fill="#7d7d7d"/>
<text x="491.5" y="679.2" font-size="13" fill="#f0f0f0" textLength="48.3" lengthAdjust="spacingAndGlyphs">White</text>
<text x="553.7" y="679.2" font-size="13" fill="#f0f0f0" textLength="61.3" lengthAdjust="spacingAndGlyphs">Gray 80</text>
<text x="624.4" y="679.2" font-size="13" fill="#f0f0f0" textLength="60.8" lengthAdjust="spacingAndGlyphs">Gray 65</text>
<text x="695" y="679.2" font-size="13" fill="#f0f0f0" textLength="61.85" lengthAdjust="spacingAndGlyphs">Gray 50</text>
<text x="766" y="679.2" font-size="13" fill="#f0f0f0" textLength="61.85" lengthAdjust="spacingAndGlyphs">Gray 35</text>
<text x="839.5" y="679.2" font-size="13" fill="#f0f0f0" textLength="41.78" lengthAdjust="spacingAndGlyphs">Black</text>
<text x="893.3" y="679.2" font-size="13" fill="#f0f0f0" textLength="72.9" lengthAdjust="spacingAndGlyphs">Dark Skin</text>
<text x="977.8" y="679.2" font-size="13" fill="#f0f0f0" textLength="74.6" lengthAdjust="spacingAndGlyphs">Light Skin</text>
<text x="1062.8" y="679.2" font-size="13" fill="#f0f0f0" textLength="65.5" lengthAdjust="spacingAndGlyphs">Blue Sky</text>
<text x="1139" y="679.2" font-size="13" fill="#f0f0f0" textLength="55.3" lengthAdjust="spacingAndGlyphs">Foliage</text>
<text x="1205.4" y="679.2" font-size="13" fill="#f0f0f0" textLength="93.11" lengthAdjust="spacingAndGlyphs">Blue Flower</text>
<text x="1308.9" y="679.2" font-size="13" fill="#f0f0f0" textLength="101.27" lengthAdjust="spacingAndGlyphs">Bluish Green</text>
<text x="1419.7" y="679.2" font-size="13" fill="#f0f0f0" textLength="60.19" lengthAdjust="spacingAndGlyphs">Orange</text>
<text x="1487.7" y="679.2" font-size="13" fill="#f0f0f0" textLength="104.57" lengthAdjust="spacingAndGlyphs">Purplish Blue</text>
<text x="1601.5" y="679.2" font-size="13" fill="#f0f0f0" textLength="115.27" lengthAdjust="spacingAndGlyphs">Moderate Red</text>
<text x="335.5" y="704" font-size="15.4" fill="#fff" font-weight="bold" textLength="71.6" lengthAdjust="spacingAndGlyphs">x: CIE31</text>
<text x="486.6" y="704" font-size="15.2" fill="#fff" textLength="35.3" lengthAdjust="spacingAndGlyphs">0,31</text>
<text x="553.6" y="704" font-size="15.2" fill="#fff" textLength="35.3" lengthAdjust="spacingAndGlyphs">0,31</text>
<text x="624.3" y="704" font-size="15.2" fill="#fff" textLength="35.3" lengthAdjust="spacingAndGlyphs">0,31</text>
<text x="695" y="704" font-size="15.2" fill="#fff" textLength="35.3" lengthAdjust="spacingAndGlyphs">0,31</text>
<text x="766" y="704" font-size="15.2" fill="#fff" textLength="35.3" lengthAdjust="spacingAndGlyphs">0,31</text>
<text x="836.6" y="704" font-size="15.2" fill="#fff" textLength="35.3" lengthAdjust="spacingAndGlyphs">0,31</text>
<text x="893.3" y="704" font-size="15.2" fill="#fff" textLength="35.3" lengthAdjust="spacingAndGlyphs">0,41</text>
<text x="977.8" y="704" font-size="15.2" fill="#fff" textLength="35.3" lengthAdjust="spacingAndGlyphs">0,38</text>
<text x="1062.8" y="704" font-size="15.2" fill="#fff" textLength="35.3" lengthAdjust="spacingAndGlyphs">0,25</text>
<text x="1139" y="704" font-size="15.2" fill="#fff" textLength="35.3" lengthAdjust="spacingAndGlyphs">0,34</text>
<text x="1205.4" y="704" font-size="15.2" fill="#fff" textLength="35.3" lengthAdjust="spacingAndGlyphs">0,27</text>
<text x="1308.9" y="704" font-size="15.2" fill="#fff" textLength="35.3" lengthAdjust="spacingAndGlyphs">0,26</text>
<text x="1419.7" y="704" font-size="15.2" fill="#fff" textLength="35.3" lengthAdjust="spacingAndGlyphs">0,51</text>
<text x="1487.7" y="704" font-size="15.2" fill="#fff" textLength="35.3" lengthAdjust="spacingAndGlyphs">0,21</text>
<text x="1601.5" y="704" font-size="15.2" fill="#fff" textLength="35.3" lengthAdjust="spacingAndGlyphs">0,47</text>
<text x="335.5" y="727.05" font-size="15.4" fill="#fff" font-weight="bold" textLength="71.2" lengthAdjust="spacingAndGlyphs">y: CIE31</text>
<text x="486.6" y="727.05" font-size="15.2" fill="#fff" textLength="35.3" lengthAdjust="spacingAndGlyphs">0,33</text>
<text x="553.6" y="727.05" font-size="15.2" fill="#fff" textLength="35.3" lengthAdjust="spacingAndGlyphs">0,33</text>
<text x="624.3" y="727.05" font-size="15.2" fill="#fff" textLength="35.3" lengthAdjust="spacingAndGlyphs">0,33</text>
<text x="695" y="727.05" font-size="15.2" fill="#fff" textLength="35.3" lengthAdjust="spacingAndGlyphs">0,33</text>
<text x="766" y="727.05" font-size="15.2" fill="#fff" textLength="35.3" lengthAdjust="spacingAndGlyphs">0,33</text>
<text x="836.6" y="727.05" font-size="15.2" fill="#fff" textLength="35.3" lengthAdjust="spacingAndGlyphs">0,28</text>
<text x="893.3" y="727.05" font-size="15.2" fill="#fff" textLength="35.3" lengthAdjust="spacingAndGlyphs">0,37</text>
<text x="977.8" y="727.05" font-size="15.2" fill="#fff" textLength="35.3" lengthAdjust="spacingAndGlyphs">0,36</text>
<text x="1062.8" y="727.05" font-size="15.2" fill="#fff" textLength="35.3" lengthAdjust="spacingAndGlyphs">0,27</text>
<text x="1139" y="727.05" font-size="15.2" fill="#fff" textLength="35.3" lengthAdjust="spacingAndGlyphs">0,44</text>
<text x="1205.4" y="727.05" font-size="15.2" fill="#fff" textLength="35.3" lengthAdjust="spacingAndGlyphs">0,25</text>
<text x="1308.9" y="727.05" font-size="15.2" fill="#fff" textLength="35.3" lengthAdjust="spacingAndGlyphs">0,36</text>
<text x="1419.7" y="727.05" font-size="15.2" fill="#fff" textLength="35.3" lengthAdjust="spacingAndGlyphs">0,41</text>
<text x="1487.7" y="727.05" font-size="15.2" fill="#fff" textLength="35.3" lengthAdjust="spacingAndGlyphs">0,19</text>
<text x="1601.5" y="727.05" font-size="15.2" fill="#fff" textLength="35.3" lengthAdjust="spacingAndGlyphs">0,32</text>
<text x="335.5" y="750.1" font-size="15.4" fill="#fff" font-weight="bold" textLength="12" lengthAdjust="spacingAndGlyphs">Y</text>
<text x="486.6" y="750.1" font-size="15.2" fill="#fff" textLength="57.95" lengthAdjust="spacingAndGlyphs">462,56</text>
<text x="553.6" y="750.1" font-size="15.2" fill="#fff" textLength="57.95" lengthAdjust="spacingAndGlyphs">375,24</text>
<text x="624.3" y="750.1" font-size="15.2" fill="#fff" textLength="57.95" lengthAdjust="spacingAndGlyphs">299,73</text>
<text x="695" y="750.1" font-size="15.2" fill="#fff" textLength="57.95" lengthAdjust="spacingAndGlyphs">229,47</text>
<text x="766" y="750.1" font-size="15.2" fill="#fff" textLength="57.95" lengthAdjust="spacingAndGlyphs">163,08</text>
<text x="836.6" y="750.1" font-size="15.2" fill="#fff" textLength="35.3" lengthAdjust="spacingAndGlyphs">0,12</text>
<text x="893.3" y="750.1" font-size="15.2" fill="#fff" textLength="46.51" lengthAdjust="spacingAndGlyphs">44,69</text>
<text x="977.8" y="750.1" font-size="15.2" fill="#fff" textLength="57.95" lengthAdjust="spacingAndGlyphs">167,35</text>
<text x="1062.8" y="750.1" font-size="15.2" fill="#fff" textLength="46.51" lengthAdjust="spacingAndGlyphs">86,34</text>
<text x="1139" y="750.1" font-size="15.2" fill="#fff" textLength="46.51" lengthAdjust="spacingAndGlyphs">59,20</text>
<text x="1205.4" y="750.1" font-size="15.2" fill="#fff" textLength="57.95" lengthAdjust="spacingAndGlyphs">109,06</text>
<text x="1308.9" y="750.1" font-size="15.2" fill="#fff" textLength="57.95" lengthAdjust="spacingAndGlyphs">196,75</text>
<text x="1419.7" y="750.1" font-size="15.2" fill="#fff" textLength="57.95" lengthAdjust="spacingAndGlyphs">132,31</text>
<text x="1487.7" y="750.1" font-size="15.2" fill="#fff" textLength="46.51" lengthAdjust="spacingAndGlyphs">52,60</text>
<text x="1601.5" y="750.1" font-size="15.2" fill="#fff" textLength="46.51" lengthAdjust="spacingAndGlyphs">85,82</text>
<text x="335.5" y="773.15" font-size="15.4" fill="#fff" font-weight="bold" textLength="130.5" lengthAdjust="spacingAndGlyphs">Target x:CIE31</text>
<text x="486.6" y="773.15" font-size="15.2" fill="#fff" textLength="35.3" lengthAdjust="spacingAndGlyphs">0,31</text>
<text x="553.6" y="773.15" font-size="15.2" fill="#fff" textLength="35.3" lengthAdjust="spacingAndGlyphs">0,31</text>
<text x="624.3" y="773.15" font-size="15.2" fill="#fff" textLength="35.3" lengthAdjust="spacingAndGlyphs">0,31</text>
<text x="695" y="773.15" font-size="15.2" fill="#fff" textLength="35.3" lengthAdjust="spacingAndGlyphs">0,31</text>
<text x="766" y="773.15" font-size="15.2" fill="#fff" textLength="35.3" lengthAdjust="spacingAndGlyphs">0,31</text>
<text x="836.6" y="773.15" font-size="15.2" fill="#fff" textLength="35.3" lengthAdjust="spacingAndGlyphs">0,31</text>
<text x="893.3" y="773.15" font-size="15.2" fill="#fff" textLength="35.3" lengthAdjust="spacingAndGlyphs">0,40</text>
<text x="977.8" y="773.15" font-size="15.2" fill="#fff" textLength="35.3" lengthAdjust="spacingAndGlyphs">0,38</text>
<text x="1062.8" y="773.15" font-size="15.2" fill="#fff" textLength="35.3" lengthAdjust="spacingAndGlyphs">0,25</text>
<text x="1139" y="773.15" font-size="15.2" fill="#fff" textLength="35.3" lengthAdjust="spacingAndGlyphs">0,34</text>
<text x="1205.4" y="773.15" font-size="15.2" fill="#fff" textLength="35.3" lengthAdjust="spacingAndGlyphs">0,27</text>
<text x="1308.9" y="773.15" font-size="15.2" fill="#fff" textLength="35.3" lengthAdjust="spacingAndGlyphs">0,26</text>
<text x="1419.7" y="773.15" font-size="15.2" fill="#fff" textLength="35.3" lengthAdjust="spacingAndGlyphs">0,51</text>
<text x="1487.7" y="773.15" font-size="15.2" fill="#fff" textLength="35.3" lengthAdjust="spacingAndGlyphs">0,22</text>
<text x="1601.5" y="773.15" font-size="15.2" fill="#fff" textLength="35.3" lengthAdjust="spacingAndGlyphs">0,46</text>
<text x="335.5" y="796.2" font-size="15.4" fill="#fff" font-weight="bold" textLength="130.5" lengthAdjust="spacingAndGlyphs">Target y:CIE31</text>
<text x="486.6" y="796.2" font-size="15.2" fill="#fff" textLength="35.3" lengthAdjust="spacingAndGlyphs">0,33</text>
<text x="553.6" y="796.2" font-size="15.2" fill="#fff" textLength="35.3" lengthAdjust="spacingAndGlyphs">0,33</text>
<text x="624.3" y="796.2" font-size="15.2" fill="#fff" textLength="35.3" lengthAdjust="spacingAndGlyphs">0,33</text>
<text x="695" y="796.2" font-size="15.2" fill="#fff" textLength="35.3" lengthAdjust="spacingAndGlyphs">0,33</text>
<text x="766" y="796.2" font-size="15.2" fill="#fff" textLength="35.3" lengthAdjust="spacingAndGlyphs">0,33</text>
<text x="836.6" y="796.2" font-size="15.2" fill="#fff" textLength="35.3" lengthAdjust="spacingAndGlyphs">0,33</text>
<text x="893.3" y="796.2" font-size="15.2" fill="#fff" textLength="35.3" lengthAdjust="spacingAndGlyphs">0,36</text>
<text x="977.8" y="796.2" font-size="15.2" fill="#fff" textLength="35.3" lengthAdjust="spacingAndGlyphs">0,36</text>
<text x="1062.8" y="796.2" font-size="15.2" fill="#fff" textLength="35.3" lengthAdjust="spacingAndGlyphs">0,27</text>
<text x="1139" y="796.2" font-size="15.2" fill="#fff" textLength="35.3" lengthAdjust="spacingAndGlyphs">0,43</text>
<text x="1205.4" y="796.2" font-size="15.2" fill="#fff" textLength="35.3" lengthAdjust="spacingAndGlyphs">0,25</text>
<text x="1308.9" y="796.2" font-size="15.2" fill="#fff" textLength="35.3" lengthAdjust="spacingAndGlyphs">0,36</text>
<text x="1419.7" y="796.2" font-size="15.2" fill="#fff" textLength="35.3" lengthAdjust="spacingAndGlyphs">0,41</text>
<text x="1487.7" y="796.2" font-size="15.2" fill="#fff" textLength="35.3" lengthAdjust="spacingAndGlyphs">0,19</text>
<text x="1601.5" y="796.2" font-size="15.2" fill="#fff" textLength="35.3" lengthAdjust="spacingAndGlyphs">0,31</text>
<text x="335.5" y="819.25" font-size="15.4" fill="#fff" font-weight="bold" textLength="75" lengthAdjust="spacingAndGlyphs">Target Y</text>
<text x="486.6" y="819.25" font-size="15.2" fill="#fff" textLength="57.95" lengthAdjust="spacingAndGlyphs">462,56</text>
<text x="553.6" y="819.25" font-size="15.2" fill="#fff" textLength="57.95" lengthAdjust="spacingAndGlyphs">366,02</text>
<text x="624.3" y="819.25" font-size="15.2" fill="#fff" textLength="57.95" lengthAdjust="spacingAndGlyphs">294,92</text>
<text x="695" y="819.25" font-size="15.2" fill="#fff" textLength="57.95" lengthAdjust="spacingAndGlyphs">227,12</text>
<text x="766" y="819.25" font-size="15.2" fill="#fff" textLength="57.95" lengthAdjust="spacingAndGlyphs">158,15</text>
<text x="836.6" y="819.25" font-size="15.2" fill="#fff" textLength="35.3" lengthAdjust="spacingAndGlyphs">0,00</text>
<text x="893.3" y="819.25" font-size="15.2" fill="#fff" textLength="46.51" lengthAdjust="spacingAndGlyphs">46,59</text>
<text x="977.8" y="819.25" font-size="15.2" fill="#fff" textLength="57.95" lengthAdjust="spacingAndGlyphs">161,41</text>
<text x="1062.8" y="819.25" font-size="15.2" fill="#fff" textLength="46.51" lengthAdjust="spacingAndGlyphs">86,49</text>
<text x="1139" y="819.25" font-size="15.2" fill="#fff" textLength="46.51" lengthAdjust="spacingAndGlyphs">60,28</text>
<text x="1205.4" y="819.25" font-size="15.2" fill="#fff" textLength="57.95" lengthAdjust="spacingAndGlyphs">107,86</text>
<text x="1308.9" y="819.25" font-size="15.2" fill="#fff" textLength="57.95" lengthAdjust="spacingAndGlyphs">193,69</text>
<text x="1419.7" y="819.25" font-size="15.2" fill="#fff" textLength="57.95" lengthAdjust="spacingAndGlyphs">131,12</text>
<text x="1487.7" y="819.25" font-size="15.2" fill="#fff" textLength="46.51" lengthAdjust="spacingAndGlyphs">54,37</text>
<text x="1601.5" y="819.25" font-size="15.2" fill="#fff" textLength="46.51" lengthAdjust="spacingAndGlyphs">86,38</text>
<text x="335.5" y="842.3" font-size="15.4" fill="#fff" font-weight="bold" textLength="74.3" lengthAdjust="spacingAndGlyphs">ΔE 2000</text>
<text x="486.6" y="842.3" font-size="15.2" fill="#fff" textLength="35.3" lengthAdjust="spacingAndGlyphs">3,47</text>
<text x="553.6" y="842.3" font-size="15.2" fill="#fff" textLength="35.3" lengthAdjust="spacingAndGlyphs">3,29</text>
<text x="624.3" y="842.3" font-size="15.2" fill="#fff" textLength="35.3" lengthAdjust="spacingAndGlyphs">2,98</text>
<text x="695" y="842.3" font-size="15.2" fill="#fff" textLength="35.3" lengthAdjust="spacingAndGlyphs">2,57</text>
<text x="766" y="842.3" font-size="15.2" fill="#fff" textLength="35.3" lengthAdjust="spacingAndGlyphs">3,02</text>
<text x="836.6" y="842.3" font-size="15.2" fill="#fff" textLength="35.3" lengthAdjust="spacingAndGlyphs">0,29</text>
<text x="893.3" y="842.3" font-size="15.2" fill="#fff" textLength="35.3" lengthAdjust="spacingAndGlyphs">1,17</text>
<text x="977.8" y="842.3" font-size="15.2" fill="#fff" textLength="35.3" lengthAdjust="spacingAndGlyphs">3,15</text>
<text x="1062.8" y="842.3" font-size="15.2" fill="#fff" textLength="35.3" lengthAdjust="spacingAndGlyphs">0,89</text>
<text x="1139" y="842.3" font-size="15.2" fill="#fff" textLength="35.3" lengthAdjust="spacingAndGlyphs">1,40</text>
<text x="1205.4" y="842.3" font-size="15.2" fill="#fff" textLength="35.3" lengthAdjust="spacingAndGlyphs">0,79</text>
<text x="1308.9" y="842.3" font-size="15.2" fill="#fff" textLength="35.3" lengthAdjust="spacingAndGlyphs">0,66</text>
<text x="1419.7" y="842.3" font-size="15.2" fill="#fff" textLength="35.3" lengthAdjust="spacingAndGlyphs">1,58</text>
<text x="1487.7" y="842.3" font-size="15.2" fill="#fff" textLength="35.3" lengthAdjust="spacingAndGlyphs">1,00</text>
<text x="1601.5" y="842.3" font-size="15.2" fill="#fff" textLength="35.3" lengthAdjust="spacingAndGlyphs">0,79</text>
<text x="335.5" y="865.35" font-size="15.4" fill="#fff" font-weight="bold" textLength="59.1" lengthAdjust="spacingAndGlyphs">ΔE ITP</text>
<text x="486.6" y="865.35" font-size="15.2" fill="#fff" textLength="35.3" lengthAdjust="spacingAndGlyphs">2,19</text>
<text x="553.6" y="865.35" font-size="15.2" fill="#fff" textLength="35.3" lengthAdjust="spacingAndGlyphs">2,80</text>
<text x="624.3" y="865.35" font-size="15.2" fill="#fff" textLength="35.3" lengthAdjust="spacingAndGlyphs">2,39</text>
<text x="695" y="865.35" font-size="15.2" fill="#fff" textLength="35.3" lengthAdjust="spacingAndGlyphs">2,03</text>
<text x="766" y="865.35" font-size="15.2" fill="#fff" textLength="35.3" lengthAdjust="spacingAndGlyphs">3,39</text>
<text x="836.6" y="865.35" font-size="15.2" fill="#fff" textLength="46.51" lengthAdjust="spacingAndGlyphs">49,23</text>
<text x="893.3" y="865.35" font-size="15.2" fill="#fff" textLength="35.3" lengthAdjust="spacingAndGlyphs">4,07</text>
<text x="977.8" y="865.35" font-size="15.2" fill="#fff" textLength="35.3" lengthAdjust="spacingAndGlyphs">4,88</text>
<text x="1062.8" y="865.35" font-size="15.2" fill="#fff" textLength="35.3" lengthAdjust="spacingAndGlyphs">1,79</text>
<text x="1139" y="865.35" font-size="15.2" fill="#fff" textLength="35.3" lengthAdjust="spacingAndGlyphs">4,70</text>
<text x="1205.4" y="865.35" font-size="15.2" fill="#fff" textLength="35.3" lengthAdjust="spacingAndGlyphs">1,73</text>
<text x="1308.9" y="865.35" font-size="15.2" fill="#fff" textLength="35.3" lengthAdjust="spacingAndGlyphs">1,65</text>
<text x="1419.7" y="865.35" font-size="15.2" fill="#fff" textLength="35.3" lengthAdjust="spacingAndGlyphs">4,73</text>
<text x="1487.7" y="865.35" font-size="15.2" fill="#fff" textLength="35.3" lengthAdjust="spacingAndGlyphs">4,71</text>
<text x="1601.5" y="865.35" font-size="15.2" fill="#fff" textLength="35.3" lengthAdjust="spacingAndGlyphs">2,19</text>
</g>
<rect x="321" y="872.6" width="1344" height="14.2" fill="#686868"/>
<rect x="341" y="874.1" width="646" height="11.2" fill="#444444" rx="5.6"/>
<rect x="321.8" y="873.9" width="14.6" height="11.6" fill="#858585" rx="2.5" stroke="#a2a2a2" stroke-width="1"/>
<path d="M332 875.1V884.3L325.6 879.7Z" fill="#3c3c3c"/>
<rect x="1649.6" y="873.9" width="14.6" height="11.6" fill="#858585" rx="2.5" stroke="#a2a2a2" stroke-width="1"/>
<path d="M1654 875.1V884.3L1660.4 879.7Z" fill="#3c3c3c"/>
<rect x="0" y="926.5" width="1264" height="63" fill="#2b2b2b"/>
<path d="M-34.3 984.8V933.8Q-34.3 928.8 -29.3 928.8H23.1Q28.1 928.8 28.1 933.8V984.8Q28.1 988.8 24.1 988.8H-30.3Q-34.3 988.8 -34.3 984.8Z" fill="url(#pbg)" stroke="#4a4a4a" stroke-width="0.8"/>
<rect x="-27.9" y="935.2" width="50" height="15" fill="#8580b1" rx="4" stroke="#000" stroke-width="0.9" stroke-opacity="0.28"/>
<text x="-24.8" y="968.9" font-size="13.4" fill="#2c2c2c" textLength="27.4" lengthAdjust="spacingAndGlyphs" stroke="#2c2c2c" stroke-width="0.55">Blue</text>
<text x="-24.8" y="983.7" font-size="13.4" fill="#2c2c2c" textLength="43.6" lengthAdjust="spacingAndGlyphs" stroke="#2c2c2c" stroke-width="0.55">Flower</text>
<path d="M30.7 984.8V933.8Q30.7 928.8 35.7 928.8H88.1Q93.1 928.8 93.1 933.8V984.8Q93.1 988.8 89.1 988.8H34.7Q30.7 988.8 30.7 984.8Z" fill="url(#pbg)" stroke="#4a4a4a" stroke-width="0.8"/>
<rect x="37.1" y="935.2" width="50" height="15" fill="#67c4ac" rx="4" stroke="#000" stroke-width="0.9" stroke-opacity="0.28"/>
<text x="43.05" y="968.9" font-size="13.4" fill="#2c2c2c" textLength="37.4" lengthAdjust="spacingAndGlyphs" stroke="#2c2c2c" stroke-width="0.55">Bluish</text>
<text x="43.05" y="983.7" font-size="13.4" fill="#2c2c2c" textLength="37.9" lengthAdjust="spacingAndGlyphs" stroke="#2c2c2c" stroke-width="0.55">Green</text>
<path d="M95.7 984.8V933.8Q95.7 928.8 100.7 928.8H153.1Q158.1 928.8 158.1 933.8V984.8Q158.1 988.8 154.1 988.8H99.7Q95.7 988.8 95.7 984.8Z" fill="url(#pbg)" stroke="#4a4a4a" stroke-width="0.8"/>
<rect x="102.1" y="935.2" width="50" height="30" fill="#dc7a28" rx="4" stroke="#000" stroke-width="0.9" stroke-opacity="0.28"/>
<text x="104.6" y="983.7" font-size="13.4" fill="#2c2c2c" textLength="44.8" lengthAdjust="spacingAndGlyphs" stroke="#2c2c2c" stroke-width="0.55">Orange</text>
<path d="M160.7 984.8V933.8Q160.7 928.8 165.7 928.8H218.1Q223.1 928.8 223.1 933.8V984.8Q223.1 988.8 219.1 988.8H164.7Q160.7 988.8 160.7 984.8Z" fill="url(#pbg)" stroke="#4a4a4a" stroke-width="0.8"/>
<rect x="167.1" y="935.2" width="50" height="15" fill="#4a5cb0" rx="4" stroke="#000" stroke-width="0.9" stroke-opacity="0.28"/>
<text x="166.75" y="968.9" font-size="13.4" fill="#2c2c2c" textLength="50.5" lengthAdjust="spacingAndGlyphs" stroke="#2c2c2c" stroke-width="0.55">Purplish</text>
<text x="166.75" y="983.7" font-size="13.4" fill="#2c2c2c" textLength="27.4" lengthAdjust="spacingAndGlyphs" stroke="#2c2c2c" stroke-width="0.55">Blue</text>
<path d="M225.7 984.8V933.8Q225.7 928.8 230.7 928.8H283.1Q288.1 928.8 288.1 933.8V984.8Q288.1 988.8 284.1 988.8H229.7Q225.7 988.8 225.7 984.8Z" fill="url(#pbg)" stroke="#4a4a4a" stroke-width="0.8"/>
<rect x="232.1" y="935.2" width="50" height="15" fill="#cc5262" rx="4" stroke="#000" stroke-width="0.9" stroke-opacity="0.28"/>
<text x="226.5" y="968.9" font-size="13.4" fill="#2c2c2c" textLength="61" lengthAdjust="spacingAndGlyphs" stroke="#2c2c2c" stroke-width="0.55">Moderate</text>
<text x="226.5" y="983.7" font-size="13.4" fill="#2c2c2c" textLength="23.3" lengthAdjust="spacingAndGlyphs" stroke="#2c2c2c" stroke-width="0.55">Red</text>
<path d="M290.7 984.8V933.8Q290.7 928.8 295.7 928.8H348.1Q353.1 928.8 353.1 933.8V984.8Q353.1 988.8 349.1 988.8H294.7Q290.7 988.8 290.7 984.8Z" fill="url(#pbg)" stroke="#4a4a4a" stroke-width="0.8"/>
<rect x="297.1" y="935.2" width="50" height="30" fill="#5c3a6e" rx="4" stroke="#000" stroke-width="0.9" stroke-opacity="0.28"/>
<text x="301.9" y="983.7" font-size="13.4" fill="#2c2c2c" textLength="40.2" lengthAdjust="spacingAndGlyphs" stroke="#2c2c2c" stroke-width="0.55">Purple</text>
<path d="M355.7 984.8V933.8Q355.7 928.8 360.7 928.8H413.1Q418.1 928.8 418.1 933.8V984.8Q418.1 988.8 414.1 988.8H359.7Q355.7 988.8 355.7 984.8Z" fill="url(#pbg)" stroke="#4a4a4a" stroke-width="0.8"/>
<rect x="362.1" y="935.2" width="50" height="15" fill="#a0c23e" rx="4" stroke="#000" stroke-width="0.9" stroke-opacity="0.28"/>
<text x="366.6" y="968.9" font-size="13.4" fill="#2c2c2c" textLength="40.8" lengthAdjust="spacingAndGlyphs" stroke="#2c2c2c" stroke-width="0.55">Yellow</text>
<text x="366.6" y="983.7" font-size="13.4" fill="#2c2c2c" textLength="37.9" lengthAdjust="spacingAndGlyphs" stroke="#2c2c2c" stroke-width="0.55">Green</text>
<path d="M420.7 984.8V933.8Q420.7 928.8 425.7 928.8H478.1Q483.1 928.8 483.1 933.8V984.8Q483.1 988.8 479.1 988.8H424.7Q420.7 988.8 420.7 984.8Z" fill="url(#pbg)" stroke="#4a4a4a" stroke-width="0.8"/>
<rect x="427.1" y="935.2" width="50" height="15" fill="#eea428" rx="4" stroke="#000" stroke-width="0.9" stroke-opacity="0.28"/>
<text x="429.6" y="968.9" font-size="13.4" fill="#2c2c2c" textLength="44.8" lengthAdjust="spacingAndGlyphs" stroke="#2c2c2c" stroke-width="0.55">Orange</text>
<text x="429.6" y="983.7" font-size="13.4" fill="#2c2c2c" textLength="40.8" lengthAdjust="spacingAndGlyphs" stroke="#2c2c2c" stroke-width="0.55">Yellow</text>
<path d="M485.7 984.8V933.8Q485.7 928.8 490.7 928.8H543.1Q548.1 928.8 548.1 933.8V984.8Q548.1 988.8 544.1 988.8H489.7Q485.7 988.8 485.7 984.8Z" fill="url(#pbg)" stroke="#4a4a4a" stroke-width="0.8"/>
<rect x="492.1" y="935.2" width="50" height="30" fill="#283a9e" rx="4" stroke="#000" stroke-width="0.9" stroke-opacity="0.28"/>
<text x="503.3" y="983.7" font-size="13.4" fill="#2c2c2c" textLength="27.4" lengthAdjust="spacingAndGlyphs" stroke="#2c2c2c" stroke-width="0.55">Blue</text>
<path d="M550.7 984.8V933.8Q550.7 928.8 555.7 928.8H608.1Q613.1 928.8 613.1 933.8V984.8Q613.1 988.8 609.1 988.8H554.7Q550.7 988.8 550.7 984.8Z" fill="url(#pbg)" stroke="#4a4a4a" stroke-width="0.8"/>
<rect x="557.1" y="935.2" width="50" height="30" fill="#42984a" rx="4" stroke="#000" stroke-width="0.9" stroke-opacity="0.28"/>
<text x="563.05" y="983.7" font-size="13.4" fill="#2c2c2c" textLength="37.9" lengthAdjust="spacingAndGlyphs" stroke="#2c2c2c" stroke-width="0.55">Green</text>
<path d="M615.7 984.8V933.8Q615.7 928.8 620.7 928.8H673.1Q678.1 928.8 678.1 933.8V984.8Q678.1 988.8 674.1 988.8H619.7Q615.7 988.8 615.7 984.8Z" fill="url(#pbg)" stroke="#4a4a4a" stroke-width="0.8"/>
<rect x="622.1" y="935.2" width="50" height="30" fill="#b23038" rx="4" stroke="#000" stroke-width="0.9" stroke-opacity="0.28"/>
<text x="635.35" y="983.7" font-size="13.4" fill="#2c2c2c" textLength="23.3" lengthAdjust="spacingAndGlyphs" stroke="#2c2c2c" stroke-width="0.55">Red</text>
<path d="M680.7 984.8V933.8Q680.7 928.8 685.7 928.8H738.1Q743.1 928.8 743.1 933.8V984.8Q743.1 988.8 739.1 988.8H684.7Q680.7 988.8 680.7 984.8Z" fill="url(#pbg)" stroke="#4a4a4a" stroke-width="0.8"/>
<rect x="687.1" y="935.2" width="50" height="30" fill="#eec820" rx="4" stroke="#000" stroke-width="0.9" stroke-opacity="0.28"/>
<text x="691.6" y="983.7" font-size="13.4" fill="#2c2c2c" textLength="40.8" lengthAdjust="spacingAndGlyphs" stroke="#2c2c2c" stroke-width="0.55">Yellow</text>
<path d="M745.7 984.8V933.8Q745.7 928.8 750.7 928.8H803.1Q808.1 928.8 808.1 933.8V984.8Q808.1 988.8 804.1 988.8H749.7Q745.7 988.8 745.7 984.8Z" fill="url(#pbg)" stroke="#4a4a4a" stroke-width="0.8"/>
<rect x="752.1" y="935.2" width="50" height="30" fill="#be5698" rx="4" stroke="#000" stroke-width="0.9" stroke-opacity="0.28"/>
<text x="749.35" y="983.7" font-size="13.4" fill="#2c2c2c" textLength="55.3" lengthAdjust="spacingAndGlyphs" stroke="#2c2c2c" stroke-width="0.55">Magenta</text>
<path d="M810.7 984.8V933.8Q810.7 928.8 815.7 928.8H868.1Q873.1 928.8 873.1 933.8V984.8Q873.1 988.8 869.1 988.8H814.7Q810.7 988.8 810.7 984.8Z" fill="url(#pbg)" stroke="#4a4a4a" stroke-width="0.8"/>
<rect x="817.1" y="935.2" width="50" height="30" fill="#0088aa" rx="4" stroke="#000" stroke-width="0.9" stroke-opacity="0.28"/>
<text x="827.3" y="983.7" font-size="13.4" fill="#2c2c2c" textLength="29.4" lengthAdjust="spacingAndGlyphs" stroke="#2c2c2c" stroke-width="0.55">Cyan</text>
<path d="M875.7 984.8V933.8Q875.7 928.8 880.7 928.8H933.1Q938.1 928.8 938.1 933.8V984.8Q938.1 988.8 934.1 988.8H879.7Q875.7 988.8 875.7 984.8Z" fill="url(#pbg)" stroke="#4a4a4a" stroke-width="0.8"/>
<rect x="882.1" y="935.2" width="50" height="30" fill="#ff0000" rx="4" stroke="#000" stroke-width="0.9" stroke-opacity="0.28"/>
<text x="876.55" y="983.7" font-size="13.4" fill="#2c2c2c" textLength="60.9" lengthAdjust="spacingAndGlyphs" stroke="#2c2c2c" stroke-width="0.55">100% Red</text>
<path d="M940.7 984.8V933.8Q940.7 928.8 945.7 928.8H998.1Q1003.1 928.8 1003.1 933.8V984.8Q1003.1 988.8 999.1 988.8H944.7Q940.7 988.8 940.7 984.8Z" fill="url(#pbg)" stroke="#4a4a4a" stroke-width="0.8"/>
<rect x="947.1" y="935.2" width="50" height="15" fill="#00ff00" rx="4" stroke="#000" stroke-width="0.9" stroke-opacity="0.28"/>
<text x="953.05" y="968.9" font-size="13.4" fill="#2c2c2c" textLength="34.2" lengthAdjust="spacingAndGlyphs" stroke="#2c2c2c" stroke-width="0.55">100%</text>
<text x="953.05" y="983.7" font-size="13.4" fill="#2c2c2c" textLength="37.9" lengthAdjust="spacingAndGlyphs" stroke="#2c2c2c" stroke-width="0.55">Green</text>
<path d="M1005.7 984.8V933.8Q1005.7 928.8 1010.7 928.8H1063.1Q1068.1 928.8 1068.1 933.8V984.8Q1068.1 988.8 1064.1 988.8H1009.7Q1005.7 988.8 1005.7 984.8Z" fill="url(#pbg)" stroke="#4a4a4a" stroke-width="0.8"/>
<rect x="1012.1" y="935.2" width="50" height="15" fill="#0000ff" rx="4" stroke="#000" stroke-width="0.9" stroke-opacity="0.28"/>
<text x="1019.9" y="968.9" font-size="13.4" fill="#2c2c2c" textLength="34.2" lengthAdjust="spacingAndGlyphs" stroke="#2c2c2c" stroke-width="0.55">100%</text>
<text x="1019.9" y="983.7" font-size="13.4" fill="#2c2c2c" textLength="27.4" lengthAdjust="spacingAndGlyphs" stroke="#2c2c2c" stroke-width="0.55">Blue</text>
<path d="M1070.7 984.8V933.8Q1070.7 928.8 1075.7 928.8H1128.1Q1133.1 928.8 1133.1 933.8V984.8Q1133.1 988.8 1129.1 988.8H1074.7Q1070.7 988.8 1070.7 984.8Z" fill="url(#pbg)" stroke="#4a4a4a" stroke-width="0.8"/>
<rect x="1077.1" y="935.2" width="50" height="15" fill="#00ffff" rx="4" stroke="#000" stroke-width="0.9" stroke-opacity="0.28"/>
<text x="1084.9" y="968.9" font-size="13.4" fill="#2c2c2c" textLength="34.2" lengthAdjust="spacingAndGlyphs" stroke="#2c2c2c" stroke-width="0.55">100%</text>
<text x="1084.9" y="983.7" font-size="13.4" fill="#2c2c2c" textLength="29.4" lengthAdjust="spacingAndGlyphs" stroke="#2c2c2c" stroke-width="0.55">Cyan</text>
<path d="M1135.7 984.8V933.8Q1135.7 928.8 1140.7 928.8H1193.1Q1198.1 928.8 1198.1 933.8V984.8Q1198.1 988.8 1194.1 988.8H1139.7Q1135.7 988.8 1135.7 984.8Z" fill="url(#pbg)" stroke="#4a4a4a" stroke-width="0.8"/>
<rect x="1142.1" y="935.2" width="50" height="15" fill="#ff00ff" rx="4" stroke="#000" stroke-width="0.9" stroke-opacity="0.28"/>
<text x="1139.35" y="968.9" font-size="13.4" fill="#2c2c2c" textLength="34.2" lengthAdjust="spacingAndGlyphs" stroke="#2c2c2c" stroke-width="0.55">100%</text>
<text x="1139.35" y="983.7" font-size="13.4" fill="#2c2c2c" textLength="55.3" lengthAdjust="spacingAndGlyphs" stroke="#2c2c2c" stroke-width="0.55">Magenta</text>
<path d="M1200.7 984.8V933.8Q1200.7 928.8 1205.7 928.8H1258.1Q1263.1 928.8 1263.1 933.8V984.8Q1263.1 988.8 1259.1 988.8H1204.7Q1200.7 988.8 1200.7 984.8Z" fill="url(#pbs)" stroke="#4a4a4a" stroke-width="0.8"/>
<rect x="1207.1" y="935.2" width="50" height="15" fill="#ffff00" rx="4" stroke="#000" stroke-width="0.9" stroke-opacity="0.28"/>
<text x="1211.6" y="968.9" font-size="13.4" fill="#fff" font-weight="bold" textLength="34.2" lengthAdjust="spacingAndGlyphs">100%</text>
<text x="1211.6" y="983.7" font-size="13.4" fill="#fff" font-weight="bold" textLength="40.8" lengthAdjust="spacingAndGlyphs">Yellow</text>
<rect x="0" y="990.2" width="1264" height="15" fill="#686868"/>
<rect x="448.4" y="991.2" width="796" height="12.4" fill="#424242" rx="6.2"/>
<rect x="1.6" y="991" width="11.4" height="12.4" fill="#8a8a8a" rx="2.5" stroke="#a6a6a6" stroke-width="1"/>
<path d="M10 992.8V1001.6L4.2 997.2Z" fill="#3a3a3a"/>
<rect x="1249.4" y="991" width="11.8" height="12.4" fill="#8a8a8a" rx="2.5" stroke="#a6a6a6" stroke-width="1"/>
<path d="M1252.6 992.8V1001.6L1258.6 997.2Z" fill="#3a3a3a"/>
<rect x="1262" y="926.5" width="405" height="80" fill="#2a2a2a"/>
<path d="M1264.3 950.8V934Q1264.3 928.8 1269.5 928.8H1319Q1324.3 928.8 1324.3 934V950.8Z" fill="url(#tbu)"/>
<circle cx="1294.5" cy="939.4" r="9.4" fill="url(#tcu)"/>
<path d="M1289.3 942.2H1299.7L1294.5 936.2Z" fill="#2a2a2a"/>
<path d="M1264.3 952H1324.3V1006H1270Q1264.3 1006 1264.3 1000Z" fill="url(#tbs)"/>
<rect x="1275.8" y="960.9" width="36.2" height="35.4" fill="#a6a6a6" rx="5.5" stroke="#2a2a2a" stroke-width="3.2"/>
<rect x="1277.4" y="978.4" width="33" height="16.3" fill="#8e8e8e" rx="3.5"/>
<rect x="1285.8" y="970" width="17.4" height="17.2" fill="#000"/>
<rect x="1285.8" y="970" width="17.4" height="8.4" fill="#1c1c1c"/>
<rect x="1325" y="928" width="57.8" height="37.8" fill="url(#tb1)"/>
<circle cx="1353.9" cy="947" r="12.2" fill="url(#tc)"/>
<rect x="1383.6" y="928" width="55.2" height="37.8" fill="url(#tb1)"/>
<circle cx="1411.2" cy="947" r="12.2" fill="url(#tc)"/>
<rect x="1439.6" y="928" width="56.6" height="37.8" fill="url(#tb1)"/>
<circle cx="1467.9" cy="947" r="12.2" fill="url(#tc)"/>
<rect x="1497" y="928" width="55.2" height="37.8" fill="url(#tb1)"/>
<circle cx="1524.2" cy="947" r="12.2" fill="url(#tc)"/>
<rect x="1552.2" y="928" width="56.6" height="37.8" fill="url(#tbd)"/>
<circle cx="1580.1" cy="947" r="12.2" fill="url(#tcd)"/>
<rect x="1608.8" y="928" width="58.4" height="37.8" fill="url(#tb1)"/>
<circle cx="1638" cy="947" r="12.2" fill="url(#tc)"/>
<rect x="1495.2" y="926.5" width="1.8" height="80" fill="#2a2a2a"/>
<rect x="1349.4" y="942.4" width="9.8" height="9.6" fill="#2e2e2e"/>
<path d="M1407.6 940.6V953.6L1418.8 947.1Z" fill="#2e2e2e"/>
<path d="M1463.6 940.2H1460.8V953.8H1463.6 M1470.8 940.2H1473.6V953.8H1470.8" fill="none" stroke="#2e2e2e" stroke-width="1.9"/>
<path d="M1463.8 947H1470.6" stroke="#2e2e2e" stroke-width="1.3" stroke-dasharray="1.4 1.1"/>
<path d="M1524.2 947C1526.6 942.2 1531.8 942.2 1531.8 947S1526.6 951.8 1524.2 947S1516.6 942.2 1516.6 947S1521.8 951.8 1524.2 947Z" fill="none" stroke="#2e2e2e" stroke-width="2.3"/>
<path d="M1584.7 944.4A6 6 0 0 0 1574.3 945.6M1575.5 949.6A6 6 0 0 0 1585.9 948.4" fill="none" stroke="#141414" stroke-width="2.4"/>
<path d="M1586.7 940.4V946H1581.3ZM1573.5 953.6V948H1578.9Z" fill="#141414"/>
<rect x="1325" y="967.2" width="170.2" height="38.8" fill="url(#tb2)"/>
<rect x="1497" y="967.2" width="171" height="38.8" fill="url(#tb2)"/>
<circle cx="1363.8" cy="986.2" r="12" fill="url(#tc)"/>
<circle cx="1630.6" cy="986.2" r="12" fill="url(#tc)"/>
<path d="M1362.6 980.6L1357.4 986.2L1362.6 991.8M1368.8 980.6L1363.6 986.2L1368.8 991.8" fill="none" stroke="#3a3a3a" stroke-width="2.2"/>
<path d="M1625.6 980.6L1630.8 986.2L1625.6 991.8M1631.8 980.6L1637 986.2L1631.8 991.8" fill="none" stroke="#3a3a3a" stroke-width="2.2"/>
<rect x="1663" y="927" width="4" height="78" fill="url(#fade)"/>
<text x="1397.5" y="995.5" font-size="27.6" fill="#3a3a3a" textLength="63" lengthAdjust="spacingAndGlyphs" stroke="#3a3a3a" stroke-width="0.9">Back</text>
<text x="1531" y="995.5" font-size="27.6" fill="#3a3a3a" textLength="65" lengthAdjust="spacingAndGlyphs" stroke="#3a3a3a" stroke-width="0.9">Next</text>
</svg>
</body></html>
